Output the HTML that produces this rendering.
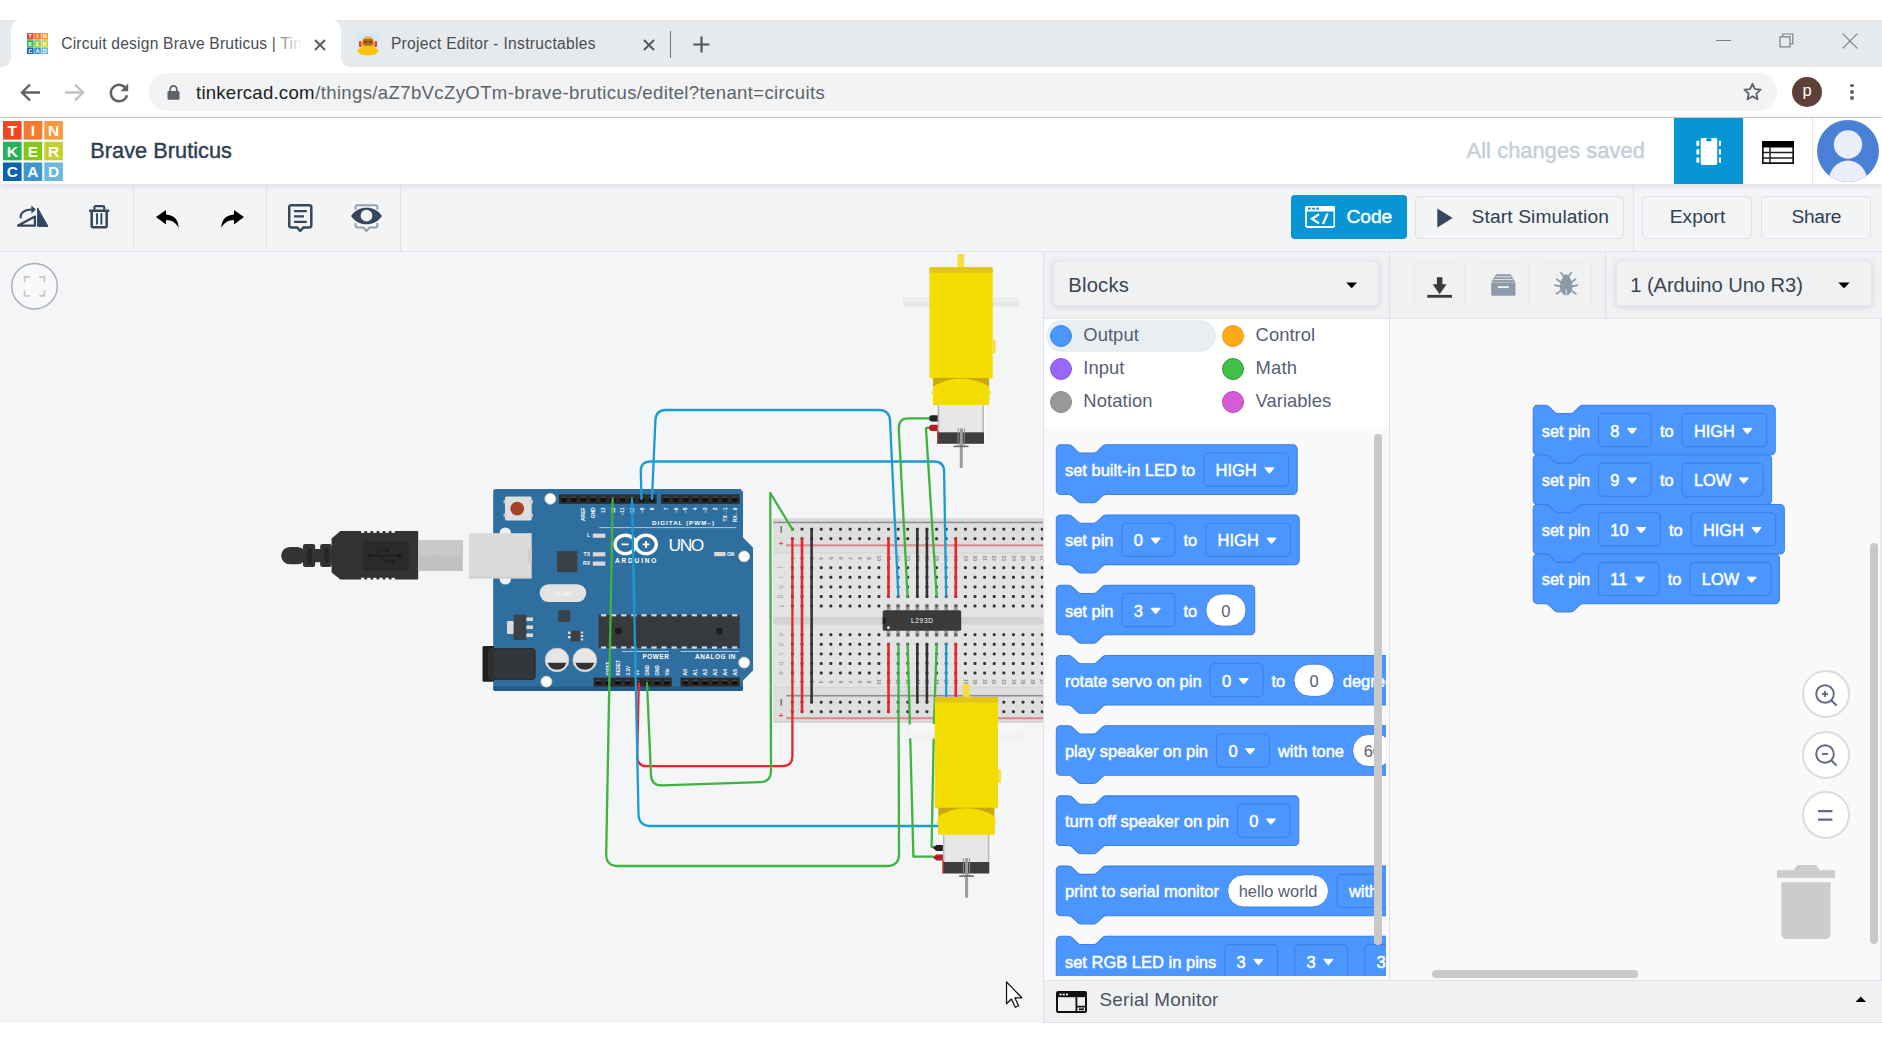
<!DOCTYPE html>
<html lang="en"><head><meta charset="utf-8"><title>Circuit design Brave Bruticus | Tinkercad</title><style>
html,body{margin:0;padding:0;background:#fff;}
body{width:1882px;height:1044px;position:relative;overflow:hidden;font-family:"Liberation Sans",Arial,sans-serif;}
.b{position:absolute;display:block;}
.t{position:absolute;white-space:nowrap;font-family:"Liberation Sans",Arial,sans-serif;}
svg{overflow:hidden;}
</style></head><body>
<div class="b" style="left:0.00px;top:252.00px;width:1043.00px;height:770.60px;background:#f4f5f7;"></div>
<div class="b" style="left:0.00px;top:20.00px;width:1882.00px;height:47.00px;background:#e7eaed;"></div>
<svg class="b" style="left:1.00px;top:20.00px;" width="350.00" height="47.00" viewBox="0 0 350 47"><path d="M0 47 C6 47 10 43 10 37 L10 10 C10 4 14 0 20 0 L330 0 C336 0 340 4 340 10 L340 37 C340 43 344 47 350 47 Z" fill="#fff"/></svg>
<svg class="b" style="left:27.00px;top:32.50px;" width="21.00" height="21.00" viewBox="0 0 21 21"><rect x="0" y="0" width="21" height="21" fill="#fff"/><rect x="0.00" y="0.00" width="6.6" height="6.6" fill="#e8452c"/><text x="3.30" y="5.40" font-family="Liberation Sans,sans-serif" font-weight="700" font-size="5.6" fill="#fff" text-anchor="middle">T</text><rect x="7.20" y="0.00" width="6.6" height="6.6" fill="#f47c2f"/><text x="10.50" y="5.40" font-family="Liberation Sans,sans-serif" font-weight="700" font-size="5.6" fill="#fff" text-anchor="middle">I</text><rect x="14.40" y="0.00" width="6.6" height="6.6" fill="#f79a2f"/><text x="17.70" y="5.40" font-family="Liberation Sans,sans-serif" font-weight="700" font-size="5.6" fill="#fff" text-anchor="middle">N</text><rect x="0.00" y="7.20" width="6.6" height="6.6" fill="#2bb24c"/><text x="3.30" y="12.60" font-family="Liberation Sans,sans-serif" font-weight="700" font-size="5.6" fill="#fff" text-anchor="middle">K</text><rect x="7.20" y="7.20" width="6.6" height="6.6" fill="#8cc63f"/><text x="10.50" y="12.60" font-family="Liberation Sans,sans-serif" font-weight="700" font-size="5.6" fill="#fff" text-anchor="middle">E</text><rect x="14.40" y="7.20" width="6.6" height="6.6" fill="#c8d12f"/><text x="17.70" y="12.60" font-family="Liberation Sans,sans-serif" font-weight="700" font-size="5.6" fill="#fff" text-anchor="middle">R</text><rect x="0.00" y="14.40" width="6.6" height="6.6" fill="#1467b3"/><text x="3.30" y="19.80" font-family="Liberation Sans,sans-serif" font-weight="700" font-size="5.6" fill="#fff" text-anchor="middle">C</text><rect x="7.20" y="14.40" width="6.6" height="6.6" fill="#3d95d0"/><text x="10.50" y="19.80" font-family="Liberation Sans,sans-serif" font-weight="700" font-size="5.6" fill="#fff" text-anchor="middle">A</text><rect x="14.40" y="14.40" width="6.6" height="6.6" fill="#66b7dd"/><text x="17.70" y="19.80" font-family="Liberation Sans,sans-serif" font-weight="700" font-size="5.6" fill="#fff" text-anchor="middle">D</text></svg>
<span class="t " style="left:61.20px;top:35.99px;font-size:15.60px;line-height:15.60px;color:#494d52;letter-spacing:0.205px;">Circuit design Brave Bruticus | Tin</span>
<div class="b" style="left:272.00px;top:30.00px;width:32.00px;height:28.00px;background:linear-gradient(90deg,rgba(255,255,255,0),#fff 95%);"></div>
<svg class="b" style="left:314.00px;top:39.00px;" width="12.00" height="12.00" viewBox="0 0 12 12"><path d="M1 1L11 11M11 1L1 11" stroke="#53575c" stroke-width="1.9" fill="none"/></svg>
<svg class="b" style="left:355.50px;top:33.50px;" width="24.00" height="22.00" viewBox="0 0 24 22"><rect x="1" y="0" width="22" height="15" rx="3" fill="#cfe9f7"/><ellipse cx="12" cy="17" rx="10.5" ry="4.5" fill="#f7c412"/><path d="M5 13 C5 5 8 2.5 12 2.5 C16 2.5 19 5 19 13 Z" fill="#f0b429"/><rect x="7" y="5" width="10" height="6.5" rx="2" fill="#b5651d"/><circle cx="9.6" cy="8" r="1.1" fill="#5d2e0c"/><circle cx="14.4" cy="8" r="1.1" fill="#5d2e0c"/><rect x="3" y="7" width="2.4" height="6" rx="1" fill="#d64545"/><rect x="18.6" y="7" width="2.4" height="6" rx="1" fill="#d64545"/></svg>
<span class="t " style="left:390.90px;top:35.99px;font-size:15.60px;line-height:15.60px;color:#494d52;letter-spacing:0.302px;">Project Editor - Instructables</span>
<svg class="b" style="left:642.50px;top:39.00px;" width="12.00" height="12.00" viewBox="0 0 12 12"><path d="M1 1L11 11M11 1L1 11" stroke="#53575c" stroke-width="1.9" fill="none"/></svg>
<div class="b" style="left:670.00px;top:31.00px;width:1.30px;height:26.50px;background:#6b7076;"></div>
<svg class="b" style="left:692.50px;top:35.50px;" width="17.00" height="17.00" viewBox="0 0 17 17"><path d="M8.5 0.5V16.5M0.5 8.5H16.5" stroke="#53575c" stroke-width="2.2" fill="none"/></svg>
<div class="b" style="left:1715.50px;top:39.50px;width:15.50px;height:1.30px;background:#7d8084;"></div>
<svg class="b" style="left:1779.00px;top:32.50px;" width="15.00" height="15.00" viewBox="0 0 15 15"><path d="M1 3.8H11V13.8H1Z M3.8 3.6V1H13.8V11H11.2" stroke="#7d8084" stroke-width="1.2" fill="none"/></svg>
<svg class="b" style="left:1842.00px;top:32.50px;" width="16.00" height="16.00" viewBox="0 0 16 16"><path d="M0.7 0.7L15.3 15.3M15.3 0.7L0.7 15.3" stroke="#7d8084" stroke-width="1.2" fill="none"/></svg>
<div class="b" style="left:0.00px;top:67.00px;width:1882.00px;height:50.00px;background:#fff;"></div>
<div class="b" style="left:0.00px;top:117.00px;width:1882.00px;height:1.20px;background:#c9cdd2;"></div>
<svg class="b" style="left:20.00px;top:83.00px;" width="21.00" height="19.00" viewBox="0 0 21 19"><path d="M20 9.5H2.5M10 1.5L2 9.5L10 17.5" stroke="#5f6368" stroke-width="2.4" fill="none"/></svg>
<svg class="b" style="left:63.50px;top:83.00px;" width="21.00" height="19.00" viewBox="0 0 21 19"><path d="M1 9.5H18.5M11 1.5L19 9.5L11 17.5" stroke="#bdc1c6" stroke-width="2.4" fill="none"/></svg>
<svg class="b" style="left:108.00px;top:81.50px;" width="22.00" height="22.00" viewBox="0 0 22 22"><path d="M18.3 7.2 A8.2 8.2 0 1 0 19 13.2" stroke="#5f6368" stroke-width="2.5" fill="none"/><path d="M20.2 1.5V9.3H12.4Z" fill="#5f6368"/></svg>
<div class="b" style="left:149.00px;top:73.00px;width:1628.00px;height:38.00px;background:#f1f3f4;border-radius:19px;"></div>
<svg class="b" style="left:167.00px;top:84.50px;" width="13.00" height="15.00" viewBox="0 0 13 15"><rect x="0.5" y="6" width="12" height="8.8" rx="1.3" fill="#5f6368"/><path d="M3.2 6.5V4.2a3.3 3.3 0 0 1 6.6 0V6.5" stroke="#5f6368" stroke-width="1.7" fill="none"/></svg>
<span class="t " style="left:196.00px;top:83.56px;font-size:18.60px;line-height:18.60px;color:#202124;letter-spacing:0.225px;">tinkercad.com</span>
<span class="t " style="left:315.20px;top:83.56px;font-size:18.60px;line-height:18.60px;color:#5f6368;letter-spacing:0.342px;">/things/aZ7bVcZyOTm-brave-bruticus/editel?tenant=circuits</span>
<svg class="b" style="left:1742.50px;top:82.00px;" width="19.00" height="19.00" viewBox="0 0 19 19"><path d="M9.5 1.8L11.9 7.1L17.6 7.7L13.3 11.6L14.5 17.3L9.5 14.4L4.5 17.3L5.7 11.6L1.4 7.7L7.1 7.1Z" stroke="#5f6368" stroke-width="1.8" fill="none" stroke-linejoin="round"/></svg>
<div class="b" style="left:1792.40px;top:76.60px;width:30.00px;height:30.00px;background:#5d4037;border-radius:50%;"></div>
<span class="t " style="left:1802.60px;top:82.03px;font-size:16.50px;line-height:16.50px;color:#fff;">p</span>
<div class="b" style="left:1850.20px;top:83.70px;width:3.80px;height:3.80px;background:#5f6368;border-radius:50%;"></div>
<div class="b" style="left:1850.20px;top:90.00px;width:3.80px;height:3.80px;background:#5f6368;border-radius:50%;"></div>
<div class="b" style="left:1850.20px;top:96.30px;width:3.80px;height:3.80px;background:#5f6368;border-radius:50%;"></div>
<div class="b" style="left:0.00px;top:118.20px;width:1882.00px;height:66.30px;background:#fff;box-shadow:0 1px 5px rgba(60,70,90,.2);z-index:3;"></div>
<svg class="b" style="left:3.00px;top:121.20px;z-index:4;" width="60.00" height="60.20" viewBox="0 0 60 60.2"><rect x="0.00" y="0.00" width="18.6" height="18.6" fill="#ee4722"/><text x="9.30" y="15.00" font-family="Liberation Sans,sans-serif" font-weight="700" font-size="15.5" fill="#fff" text-anchor="middle">T</text><rect x="20.65" y="0.00" width="18.6" height="18.6" fill="#f47a30"/><text x="29.95" y="15.00" font-family="Liberation Sans,sans-serif" font-weight="700" font-size="15.5" fill="#fff" text-anchor="middle">I</text><rect x="41.30" y="0.00" width="18.6" height="18.6" fill="#f89a3c"/><text x="50.60" y="15.00" font-family="Liberation Sans,sans-serif" font-weight="700" font-size="15.5" fill="#fff" text-anchor="middle">N</text><rect x="0.00" y="20.75" width="18.6" height="18.6" fill="#27b25a"/><text x="9.30" y="35.75" font-family="Liberation Sans,sans-serif" font-weight="700" font-size="15.5" fill="#fff" text-anchor="middle">K</text><rect x="20.65" y="20.75" width="18.6" height="18.6" fill="#84c70f"/><text x="29.95" y="35.75" font-family="Liberation Sans,sans-serif" font-weight="700" font-size="15.5" fill="#fff" text-anchor="middle">E</text><rect x="41.30" y="20.75" width="18.6" height="18.6" fill="#c4ce2c"/><text x="50.60" y="35.75" font-family="Liberation Sans,sans-serif" font-weight="700" font-size="15.5" fill="#fff" text-anchor="middle">R</text><rect x="0.00" y="41.50" width="18.6" height="18.6" fill="#0d62af"/><text x="9.30" y="56.50" font-family="Liberation Sans,sans-serif" font-weight="700" font-size="15.5" fill="#fff" text-anchor="middle">C</text><rect x="20.65" y="41.50" width="18.6" height="18.6" fill="#3e96ce"/><text x="29.95" y="56.50" font-family="Liberation Sans,sans-serif" font-weight="700" font-size="15.5" fill="#fff" text-anchor="middle">A</text><rect x="41.30" y="41.50" width="18.6" height="18.6" fill="#6ab8dd"/><text x="50.60" y="56.50" font-family="Liberation Sans,sans-serif" font-weight="700" font-size="15.5" fill="#fff" text-anchor="middle">D</text></svg>
<span class="t " style="left:90.30px;top:139.83px;font-size:21.70px;line-height:21.70px;color:#2f3f52;letter-spacing:0.049px;z-index:4;-webkit-text-stroke:0.45px #2f3f52;">Brave Bruticus</span>
<span class="t " style="left:1466.50px;top:139.75px;font-size:21.80px;line-height:21.80px;color:#c4ced9;letter-spacing:0.092px;z-index:4;-webkit-text-stroke:0.45px #c4ced9;">All changes saved</span>
<div class="b" style="left:1673.80px;top:118.20px;width:69.40px;height:66.30px;background:#0895d6;z-index:4;"></div>
<svg class="b" style="left:1695.50px;top:137.70px;z-index:5;" width="25.60" height="27.50" viewBox="0 0 25.6 27.5"><rect x="4.7" y="0" width="16.5" height="27" rx="1.4" fill="#fff"/><ellipse cx="12.95" cy="1.7" rx="2.9" ry="1.7" fill="#0895d6"/><rect x="0.4" y="2.8" width="2.8" height="5.1" fill="#fff"/><rect x="22.9" y="2.8" width="2.6" height="5.1" fill="#fff"/><rect x="0.4" y="11.3" width="2.8" height="5.1" fill="#fff"/><rect x="22.9" y="11.3" width="2.6" height="5.1" fill="#fff"/><rect x="0.4" y="19.5" width="2.8" height="5.1" fill="#fff"/><rect x="22.9" y="19.5" width="2.6" height="5.1" fill="#fff"/></svg>
<svg class="b" style="left:1762.00px;top:140.50px;z-index:5;" width="32.00" height="23.00" viewBox="0 0 32 23"><rect x="0" y="0" width="32" height="6.5" fill="#000"/><path d="M0.8 6V22.2H31.2V6" stroke="#111" stroke-width="1.7" fill="none"/><path d="M0.8 11.6H31.2M0.8 17H31.2M8 6V22" stroke="#222" stroke-width="1.5" fill="none"/></svg>
<div class="b" style="left:1811.60px;top:118.20px;width:1.00px;height:66.30px;background:#e3e6ea;z-index:4;"></div>
<svg class="b" style="left:1817.00px;top:119.60px;z-index:5;" width="62.00" height="62.00" viewBox="0 0 62 62"><defs><clipPath id="avc"><circle cx="31" cy="31" r="31"/></clipPath></defs><circle cx="31" cy="31" r="31" fill="#4a80d6"/><g clip-path="url(#avc)"><circle cx="31" cy="24.5" r="14.2" fill="#e9eef9"/><ellipse cx="31" cy="62" rx="19.5" ry="21.5" fill="#e9eef9"/></g></svg>
<div class="b" style="left:0.00px;top:184.50px;width:1882.00px;height:66.50px;background:#f3f4f6;z-index:1;"></div>
<div class="b" style="left:0.00px;top:250.60px;width:1882.00px;height:1.40px;background:#e1e4ea;z-index:2;"></div>
<div class="b" style="left:132.60px;top:184.50px;width:1.20px;height:66.50px;background:#e0e3ea;z-index:2;"></div>
<div class="b" style="left:266.00px;top:184.50px;width:1.20px;height:66.50px;background:#e0e3ea;z-index:2;"></div>
<div class="b" style="left:399.60px;top:184.50px;width:1.20px;height:66.50px;background:#e0e3ea;z-index:2;"></div>
<div class="b" style="left:1633.00px;top:184.50px;width:1.20px;height:66.50px;background:#e0e3ea;z-index:2;"></div>
<svg class="b" style="left:17.00px;top:205.30px;z-index:2;" width="32.00" height="23.00" viewBox="0 0 32 23"><path d="M20.6 21.4V2.9L31 21.4Z" fill="#34475c" stroke="#34475c" stroke-width="1" stroke-linejoin="round"/><path d="M1.2 20.6H17.9V11.6Z" stroke="#34475c" stroke-width="2.3" fill="none" stroke-linejoin="round"/><path d="M3.7 13.4C3 7.6 8 4.5 14.8 4.5" stroke="#34475c" stroke-width="2.1" fill="none"/><path d="M14.4 0.5L18.9 4.6L14.4 8.7Z" fill="#34475c"/></svg>
<svg class="b" style="left:89.00px;top:205.00px;z-index:2;" width="20.60" height="23.80" viewBox="0 0 20.6 23.8"><path d="M5.4 4.8V2.4Q5.4 1.2 6.6 1.2H14Q15.2 1.2 15.2 2.4V4.8" stroke="#34475c" stroke-width="2.2" fill="none"/><rect x="0" y="4.4" width="20.4" height="2.5" rx="0.8" fill="#34475c"/><path d="M2.7 6.8V21Q2.7 22.2 3.9 22.2H16.5Q17.7 22.2 17.7 21V6.8" stroke="#34475c" stroke-width="2.5" fill="none"/><path d="M8 9V18.8M12.4 9V18.8" stroke="#34475c" stroke-width="1.9" fill="none" stroke-linecap="round"/></svg>
<svg class="b" style="left:156.00px;top:209.50px;z-index:2;" width="23.00" height="18.20" viewBox="0 0 23 18.2"><path d="M0 7L10 0V4.6C18 5.2 22.6 9.8 22.6 18C20 12.6 16 10.2 10 10V14.4Z" fill="#000"/></svg>
<svg class="b" style="left:221.00px;top:209.50px;z-index:2;" width="23.00" height="18.20" viewBox="0 0 23 18.2"><g transform="translate(23,0) scale(-1,1)"><path d="M0 7L10 0V4.6C18 5.2 22.6 9.8 22.6 18C20 12.6 16 10.2 10 10V14.4Z" fill="#000"/></g></svg>
<svg class="b" style="left:288.00px;top:203.60px;z-index:2;" width="24.60" height="28.80" viewBox="0 0 24.6 28.8"><path d="M3 1.3H21.5a1.8 1.8 0 0 1 1.8 1.8V21.6a1.8 1.8 0 0 1 -1.8 1.8H15.4L12.25 27L9.1 23.4H3a1.8 1.8 0 0 1 -1.8 -1.8V3.1A1.8 1.8 0 0 1 3 1.3Z" stroke="#34475c" stroke-width="2.5" fill="none" stroke-linejoin="round"/><path d="M6 7.1H18.8M6 12.4H16M6 17.9H18.8" stroke="#34475c" stroke-width="2.3" fill="none"/></svg>
<svg class="b" style="left:351.00px;top:203.60px;z-index:2;" width="31.00" height="28.50" viewBox="0 0 31 28.5"><path d="M4.6 5.6V3Q4.6 1.2 6.4 1.2H24.6Q26.4 1.2 26.4 3V5.6M4.6 19V21.6Q4.6 23.4 6.4 23.4H12.2L15.5 27L18.8 23.4H24.6Q26.4 23.4 26.4 21.6V19" stroke="#94a1b0" stroke-width="2" fill="none" stroke-linejoin="round"/><path d="M0 12C4 6.1 9.4 3.7 15.5 3.7C21.6 3.7 27 6.1 31 12C27 17.9 21.6 20.3 15.5 20.3C9.4 20.3 4 17.9 0 12Z" fill="#34475c"/><circle cx="15.5" cy="11.7" r="5.9" fill="#f3f4f6"/></svg>
<div class="b" style="left:1291.00px;top:195.20px;width:116.00px;height:44.30px;background:#0895d6;border-radius:4px;z-index:2;"></div>
<svg class="b" style="left:1304.70px;top:206.40px;z-index:2;" width="30.40" height="22.40" viewBox="0 0 30.4 22.4"><rect x="1" y="1" width="28.4" height="20" rx="1.2" stroke="#fff" stroke-width="1.8" fill="none"/><rect x="0.2" y="0.2" width="30" height="5.2" rx="1.2" fill="#fff"/><rect x="3" y="1.6" width="2.6" height="2.2" rx="0.6" fill="#0895d6"/><rect x="7.2" y="1.6" width="2.6" height="2.2" rx="0.6" fill="#0895d6"/><rect x="11.4" y="1.6" width="2.6" height="2.2" rx="0.6" fill="#0895d6"/><path d="M14 8.2L7 12.8L14 17.4M22.6 7.6L18 18" stroke="#fff" stroke-width="2.3" fill="none"/></svg>
<span class="t " style="left:1346.60px;top:206.65px;font-size:19.20px;line-height:19.20px;color:#fff;letter-spacing:-0.100px;z-index:2;-webkit-text-stroke:0.4px #fff;">Code</span>
<div class="b" style="left:1415.20px;top:195.60px;width:208.60px;height:43.60px;background:#f3f4f6;border:1.2px solid #dfe2e8;border-radius:4px;box-sizing:border-box;z-index:2;"></div>
<svg class="b" style="left:1437.00px;top:207.80px;z-index:2;" width="16.00" height="19.80" viewBox="0 0 16 19.8"><path d="M0.3 0.4L15.6 9.9L0.3 19.4Z" fill="#34475c"/></svg>
<span class="t " style="left:1471.60px;top:206.65px;font-size:19.20px;line-height:19.20px;color:#2f3f52;letter-spacing:0.123px;z-index:2;">Start Simulation</span>
<div class="b" style="left:1642.40px;top:195.60px;width:109.60px;height:43.60px;background:#f3f4f6;border:1.2px solid #dfe2e8;border-radius:4px;box-sizing:border-box;z-index:2;"></div>
<span class="t " style="left:1669.80px;top:206.65px;font-size:19.20px;line-height:19.20px;color:#2f3f52;letter-spacing:0.018px;z-index:2;">Export</span>
<div class="b" style="left:1761.00px;top:195.60px;width:109.60px;height:43.60px;background:#f3f4f6;border:1.2px solid #dfe2e8;border-radius:4px;box-sizing:border-box;z-index:2;"></div>
<span class="t " style="left:1791.50px;top:206.65px;font-size:19.20px;line-height:19.20px;color:#2f3f52;letter-spacing:-0.327px;z-index:2;">Share</span>
<svg class="b" style="left:0;top:252px" width="1043" height="770.6" viewBox="0 252 1043 770.6"><g font-family="Liberation Sans,Arial,sans-serif"><circle cx="34.5" cy="286.2" r="22.8" fill="#f8f9fa" stroke="#a9aeb7" stroke-width="1.5"/><path d="M24.6 282V276.8H29.8M39.2 276.8H44.4V282M44.4 290.6V295.8H39.2M29.8 295.8H24.6V290.6" stroke="#c6c7c9" stroke-width="1.8" fill="none"/><g transform="translate(0,0)"><rect x="903.1" y="296.9" width="115.6" height="9.9" fill="#e6e7e8" rx="2"/><rect x="903.6" y="297.4" width="114.6" height="4.45" fill="#eef0f0" rx="1.5"/><rect x="957.5" y="254" width="6.8" height="15" fill="#f6dc45" /><rect x="929.5" y="267.2" width="63.2" height="111.4" fill="#f3dd00" rx="1.6"/><rect x="929.5" y="267.2" width="63.2" height="5.6" fill="#e3c613" rx="1.6"/><rect x="992.7" y="339.8" width="2.9" height="13.2" fill="#f6dc45" /><clipPath id="mc0"><rect x="932.9" y="377.7" width="56.5" height="27.6" rx="2"/></clipPath><g clip-path="url(#mc0)"><rect x="932.9" y="377.7" width="56.5" height="27.6" fill="#c9a90e" /><path d="M932.9 386.4Q961.1 370.6 989.4 386.4V405.3H932.9Z" fill="#f3dd00"/></g><rect x="931.2" y="391.6" width="1.8" height="2.4" fill="#f6dc45" /><rect x="989.3" y="391.6" width="1.7" height="2.4" fill="#f6dc45" /><rect x="933.4" y="405.3" width="55" height="41.1" fill="#f7f7f8" stroke="#ececee" stroke-width="0.6"/><rect x="937.7" y="405.3" width="46.3" height="27" fill="#e7e7e8" /><rect x="937.7" y="405.3" width="1.5" height="27" fill="#b9b9b9" /><rect x="982.5" y="405.3" width="1.5" height="27" fill="#b9b9b9" /><rect x="937.7" y="432.3" width="46.3" height="11.5" fill="#3d3d3f" /><rect x="937" y="430.6" width="1.4" height="13.2" fill="#c83232" /><path d="M927.6 418.3L931 415.3H937.6V421.4H931Z" fill="#222"/><path d="M927.6 427.8L931 424.8H937.6V430.9H931Z" fill="#b51c1c"/><rect x="957.6" y="428.4" width="1" height="17.6" fill="#8a8a8a" /><rect x="963.8" y="428.4" width="1" height="17.6" fill="#8a8a8a" /><rect x="959.8" y="428.4" width="3" height="39.6" fill="#9c9c9c" /><rect x="953.8" y="445.6" width="14.7" height="1.6" fill="#6a6a6a" /></g><rect x="773.2" y="518.4" width="270" height="204.2" fill="#dedede" /><rect x="773.2" y="553" width="270" height="134.4" fill="#e3e3e3" /><rect x="773.2" y="552.4" width="270" height="1.2" fill="#d6d6d6" /><rect x="773.2" y="686.8" width="270" height="1.2" fill="#d6d6d6" /><rect x="773.2" y="616.9" width="270" height="7.7" fill="#d2d2d2" /><rect x="773.2" y="721" width="270" height="1.6" fill="#d0d0d0" /><rect x="773.2" y="518.4" width="270" height="3.3" fill="#d9d9d9" /><rect x="773.2" y="521.7" width="270" height="1.5" fill="#8e8e8e" /><rect x="786.4" y="694.9" width="256.8" height="1.6" fill="#8e8e8e" /><rect x="786" y="544.4" width="257.2" height="1.9" fill="#da8484" /><rect x="786.4" y="717.3" width="256.8" height="1.9" fill="#da8484" /><defs><pattern id="hp" x="791.05" y="0" width="9.61" height="9.6" patternUnits="userSpaceOnUse"><rect x="0" y="0" width="2.7" height="2.7" rx="0.6" fill="#3c3c3c"/></pattern></defs><g fill="#333"><rect x="790.9" y="527.7" width="3" height="3" rx="1.1"/><rect x="800.51" y="527.7" width="3" height="3" rx="1.1"/><rect x="810.12" y="527.7" width="3" height="3" rx="1.1"/><rect x="819.73" y="527.7" width="3" height="3" rx="1.1"/><rect x="829.34" y="527.7" width="3" height="3" rx="1.1"/><rect x="838.95" y="527.7" width="3" height="3" rx="1.1"/><rect x="848.56" y="527.7" width="3" height="3" rx="1.1"/><rect x="858.17" y="527.7" width="3" height="3" rx="1.1"/><rect x="867.78" y="527.7" width="3" height="3" rx="1.1"/><rect x="877.39" y="527.7" width="3" height="3" rx="1.1"/><rect x="887" y="527.7" width="3" height="3" rx="1.1"/><rect x="896.61" y="527.7" width="3" height="3" rx="1.1"/><rect x="906.22" y="527.7" width="3" height="3" rx="1.1"/><rect x="915.83" y="527.7" width="3" height="3" rx="1.1"/><rect x="925.44" y="527.7" width="3" height="3" rx="1.1"/><rect x="935.05" y="527.7" width="3" height="3" rx="1.1"/><rect x="944.66" y="527.7" width="3" height="3" rx="1.1"/><rect x="954.27" y="527.7" width="3" height="3" rx="1.1"/><rect x="963.88" y="527.7" width="3" height="3" rx="1.1"/><rect x="973.49" y="527.7" width="3" height="3" rx="1.1"/><rect x="983.1" y="527.7" width="3" height="3" rx="1.1"/><rect x="992.71" y="527.7" width="3" height="3" rx="1.1"/><rect x="1002.32" y="527.7" width="3" height="3" rx="1.1"/><rect x="1011.93" y="527.7" width="3" height="3" rx="1.1"/><rect x="1021.54" y="527.7" width="3" height="3" rx="1.1"/><rect x="1031.15" y="527.7" width="3" height="3" rx="1.1"/><rect x="1040.76" y="527.7" width="3" height="3" rx="1.1"/><rect x="790.9" y="537.2" width="3" height="3" rx="1.1"/><rect x="800.51" y="537.2" width="3" height="3" rx="1.1"/><rect x="810.12" y="537.2" width="3" height="3" rx="1.1"/><rect x="819.73" y="537.2" width="3" height="3" rx="1.1"/><rect x="829.34" y="537.2" width="3" height="3" rx="1.1"/><rect x="838.95" y="537.2" width="3" height="3" rx="1.1"/><rect x="848.56" y="537.2" width="3" height="3" rx="1.1"/><rect x="858.17" y="537.2" width="3" height="3" rx="1.1"/><rect x="867.78" y="537.2" width="3" height="3" rx="1.1"/><rect x="877.39" y="537.2" width="3" height="3" rx="1.1"/><rect x="887" y="537.2" width="3" height="3" rx="1.1"/><rect x="896.61" y="537.2" width="3" height="3" rx="1.1"/><rect x="906.22" y="537.2" width="3" height="3" rx="1.1"/><rect x="915.83" y="537.2" width="3" height="3" rx="1.1"/><rect x="925.44" y="537.2" width="3" height="3" rx="1.1"/><rect x="935.05" y="537.2" width="3" height="3" rx="1.1"/><rect x="944.66" y="537.2" width="3" height="3" rx="1.1"/><rect x="954.27" y="537.2" width="3" height="3" rx="1.1"/><rect x="963.88" y="537.2" width="3" height="3" rx="1.1"/><rect x="973.49" y="537.2" width="3" height="3" rx="1.1"/><rect x="983.1" y="537.2" width="3" height="3" rx="1.1"/><rect x="992.71" y="537.2" width="3" height="3" rx="1.1"/><rect x="1002.32" y="537.2" width="3" height="3" rx="1.1"/><rect x="1011.93" y="537.2" width="3" height="3" rx="1.1"/><rect x="1021.54" y="537.2" width="3" height="3" rx="1.1"/><rect x="1031.15" y="537.2" width="3" height="3" rx="1.1"/><rect x="1040.76" y="537.2" width="3" height="3" rx="1.1"/><rect x="790.9" y="566.2" width="3" height="3" rx="1.1"/><rect x="800.51" y="566.2" width="3" height="3" rx="1.1"/><rect x="810.12" y="566.2" width="3" height="3" rx="1.1"/><rect x="819.73" y="566.2" width="3" height="3" rx="1.1"/><rect x="829.34" y="566.2" width="3" height="3" rx="1.1"/><rect x="838.95" y="566.2" width="3" height="3" rx="1.1"/><rect x="848.56" y="566.2" width="3" height="3" rx="1.1"/><rect x="858.17" y="566.2" width="3" height="3" rx="1.1"/><rect x="867.78" y="566.2" width="3" height="3" rx="1.1"/><rect x="877.39" y="566.2" width="3" height="3" rx="1.1"/><rect x="887" y="566.2" width="3" height="3" rx="1.1"/><rect x="896.61" y="566.2" width="3" height="3" rx="1.1"/><rect x="906.22" y="566.2" width="3" height="3" rx="1.1"/><rect x="915.83" y="566.2" width="3" height="3" rx="1.1"/><rect x="925.44" y="566.2" width="3" height="3" rx="1.1"/><rect x="935.05" y="566.2" width="3" height="3" rx="1.1"/><rect x="944.66" y="566.2" width="3" height="3" rx="1.1"/><rect x="954.27" y="566.2" width="3" height="3" rx="1.1"/><rect x="963.88" y="566.2" width="3" height="3" rx="1.1"/><rect x="973.49" y="566.2" width="3" height="3" rx="1.1"/><rect x="983.1" y="566.2" width="3" height="3" rx="1.1"/><rect x="992.71" y="566.2" width="3" height="3" rx="1.1"/><rect x="1002.32" y="566.2" width="3" height="3" rx="1.1"/><rect x="1011.93" y="566.2" width="3" height="3" rx="1.1"/><rect x="1021.54" y="566.2" width="3" height="3" rx="1.1"/><rect x="1031.15" y="566.2" width="3" height="3" rx="1.1"/><rect x="1040.76" y="566.2" width="3" height="3" rx="1.1"/><rect x="790.9" y="575.8" width="3" height="3" rx="1.1"/><rect x="800.51" y="575.8" width="3" height="3" rx="1.1"/><rect x="810.12" y="575.8" width="3" height="3" rx="1.1"/><rect x="819.73" y="575.8" width="3" height="3" rx="1.1"/><rect x="829.34" y="575.8" width="3" height="3" rx="1.1"/><rect x="838.95" y="575.8" width="3" height="3" rx="1.1"/><rect x="848.56" y="575.8" width="3" height="3" rx="1.1"/><rect x="858.17" y="575.8" width="3" height="3" rx="1.1"/><rect x="867.78" y="575.8" width="3" height="3" rx="1.1"/><rect x="877.39" y="575.8" width="3" height="3" rx="1.1"/><rect x="887" y="575.8" width="3" height="3" rx="1.1"/><rect x="896.61" y="575.8" width="3" height="3" rx="1.1"/><rect x="906.22" y="575.8" width="3" height="3" rx="1.1"/><rect x="915.83" y="575.8" width="3" height="3" rx="1.1"/><rect x="925.44" y="575.8" width="3" height="3" rx="1.1"/><rect x="935.05" y="575.8" width="3" height="3" rx="1.1"/><rect x="944.66" y="575.8" width="3" height="3" rx="1.1"/><rect x="954.27" y="575.8" width="3" height="3" rx="1.1"/><rect x="963.88" y="575.8" width="3" height="3" rx="1.1"/><rect x="973.49" y="575.8" width="3" height="3" rx="1.1"/><rect x="983.1" y="575.8" width="3" height="3" rx="1.1"/><rect x="992.71" y="575.8" width="3" height="3" rx="1.1"/><rect x="1002.32" y="575.8" width="3" height="3" rx="1.1"/><rect x="1011.93" y="575.8" width="3" height="3" rx="1.1"/><rect x="1021.54" y="575.8" width="3" height="3" rx="1.1"/><rect x="1031.15" y="575.8" width="3" height="3" rx="1.1"/><rect x="1040.76" y="575.8" width="3" height="3" rx="1.1"/><rect x="790.9" y="585.4" width="3" height="3" rx="1.1"/><rect x="800.51" y="585.4" width="3" height="3" rx="1.1"/><rect x="810.12" y="585.4" width="3" height="3" rx="1.1"/><rect x="819.73" y="585.4" width="3" height="3" rx="1.1"/><rect x="829.34" y="585.4" width="3" height="3" rx="1.1"/><rect x="838.95" y="585.4" width="3" height="3" rx="1.1"/><rect x="848.56" y="585.4" width="3" height="3" rx="1.1"/><rect x="858.17" y="585.4" width="3" height="3" rx="1.1"/><rect x="867.78" y="585.4" width="3" height="3" rx="1.1"/><rect x="877.39" y="585.4" width="3" height="3" rx="1.1"/><rect x="887" y="585.4" width="3" height="3" rx="1.1"/><rect x="896.61" y="585.4" width="3" height="3" rx="1.1"/><rect x="906.22" y="585.4" width="3" height="3" rx="1.1"/><rect x="915.83" y="585.4" width="3" height="3" rx="1.1"/><rect x="925.44" y="585.4" width="3" height="3" rx="1.1"/><rect x="935.05" y="585.4" width="3" height="3" rx="1.1"/><rect x="944.66" y="585.4" width="3" height="3" rx="1.1"/><rect x="954.27" y="585.4" width="3" height="3" rx="1.1"/><rect x="963.88" y="585.4" width="3" height="3" rx="1.1"/><rect x="973.49" y="585.4" width="3" height="3" rx="1.1"/><rect x="983.1" y="585.4" width="3" height="3" rx="1.1"/><rect x="992.71" y="585.4" width="3" height="3" rx="1.1"/><rect x="1002.32" y="585.4" width="3" height="3" rx="1.1"/><rect x="1011.93" y="585.4" width="3" height="3" rx="1.1"/><rect x="1021.54" y="585.4" width="3" height="3" rx="1.1"/><rect x="1031.15" y="585.4" width="3" height="3" rx="1.1"/><rect x="1040.76" y="585.4" width="3" height="3" rx="1.1"/><rect x="790.9" y="595" width="3" height="3" rx="1.1"/><rect x="800.51" y="595" width="3" height="3" rx="1.1"/><rect x="810.12" y="595" width="3" height="3" rx="1.1"/><rect x="819.73" y="595" width="3" height="3" rx="1.1"/><rect x="829.34" y="595" width="3" height="3" rx="1.1"/><rect x="838.95" y="595" width="3" height="3" rx="1.1"/><rect x="848.56" y="595" width="3" height="3" rx="1.1"/><rect x="858.17" y="595" width="3" height="3" rx="1.1"/><rect x="867.78" y="595" width="3" height="3" rx="1.1"/><rect x="877.39" y="595" width="3" height="3" rx="1.1"/><rect x="887" y="595" width="3" height="3" rx="1.1"/><rect x="896.61" y="595" width="3" height="3" rx="1.1"/><rect x="906.22" y="595" width="3" height="3" rx="1.1"/><rect x="915.83" y="595" width="3" height="3" rx="1.1"/><rect x="925.44" y="595" width="3" height="3" rx="1.1"/><rect x="935.05" y="595" width="3" height="3" rx="1.1"/><rect x="944.66" y="595" width="3" height="3" rx="1.1"/><rect x="954.27" y="595" width="3" height="3" rx="1.1"/><rect x="963.88" y="595" width="3" height="3" rx="1.1"/><rect x="973.49" y="595" width="3" height="3" rx="1.1"/><rect x="983.1" y="595" width="3" height="3" rx="1.1"/><rect x="992.71" y="595" width="3" height="3" rx="1.1"/><rect x="1002.32" y="595" width="3" height="3" rx="1.1"/><rect x="1011.93" y="595" width="3" height="3" rx="1.1"/><rect x="1021.54" y="595" width="3" height="3" rx="1.1"/><rect x="1031.15" y="595" width="3" height="3" rx="1.1"/><rect x="1040.76" y="595" width="3" height="3" rx="1.1"/><rect x="790.9" y="604.6" width="3" height="3" rx="1.1"/><rect x="800.51" y="604.6" width="3" height="3" rx="1.1"/><rect x="810.12" y="604.6" width="3" height="3" rx="1.1"/><rect x="819.73" y="604.6" width="3" height="3" rx="1.1"/><rect x="829.34" y="604.6" width="3" height="3" rx="1.1"/><rect x="838.95" y="604.6" width="3" height="3" rx="1.1"/><rect x="848.56" y="604.6" width="3" height="3" rx="1.1"/><rect x="858.17" y="604.6" width="3" height="3" rx="1.1"/><rect x="867.78" y="604.6" width="3" height="3" rx="1.1"/><rect x="877.39" y="604.6" width="3" height="3" rx="1.1"/><rect x="887" y="604.6" width="3" height="3" rx="1.1"/><rect x="896.61" y="604.6" width="3" height="3" rx="1.1"/><rect x="906.22" y="604.6" width="3" height="3" rx="1.1"/><rect x="915.83" y="604.6" width="3" height="3" rx="1.1"/><rect x="925.44" y="604.6" width="3" height="3" rx="1.1"/><rect x="935.05" y="604.6" width="3" height="3" rx="1.1"/><rect x="944.66" y="604.6" width="3" height="3" rx="1.1"/><rect x="954.27" y="604.6" width="3" height="3" rx="1.1"/><rect x="963.88" y="604.6" width="3" height="3" rx="1.1"/><rect x="973.49" y="604.6" width="3" height="3" rx="1.1"/><rect x="983.1" y="604.6" width="3" height="3" rx="1.1"/><rect x="992.71" y="604.6" width="3" height="3" rx="1.1"/><rect x="1002.32" y="604.6" width="3" height="3" rx="1.1"/><rect x="1011.93" y="604.6" width="3" height="3" rx="1.1"/><rect x="1021.54" y="604.6" width="3" height="3" rx="1.1"/><rect x="1031.15" y="604.6" width="3" height="3" rx="1.1"/><rect x="1040.76" y="604.6" width="3" height="3" rx="1.1"/><rect x="790.9" y="633.2" width="3" height="3" rx="1.1"/><rect x="800.51" y="633.2" width="3" height="3" rx="1.1"/><rect x="810.12" y="633.2" width="3" height="3" rx="1.1"/><rect x="819.73" y="633.2" width="3" height="3" rx="1.1"/><rect x="829.34" y="633.2" width="3" height="3" rx="1.1"/><rect x="838.95" y="633.2" width="3" height="3" rx="1.1"/><rect x="848.56" y="633.2" width="3" height="3" rx="1.1"/><rect x="858.17" y="633.2" width="3" height="3" rx="1.1"/><rect x="867.78" y="633.2" width="3" height="3" rx="1.1"/><rect x="877.39" y="633.2" width="3" height="3" rx="1.1"/><rect x="887" y="633.2" width="3" height="3" rx="1.1"/><rect x="896.61" y="633.2" width="3" height="3" rx="1.1"/><rect x="906.22" y="633.2" width="3" height="3" rx="1.1"/><rect x="915.83" y="633.2" width="3" height="3" rx="1.1"/><rect x="925.44" y="633.2" width="3" height="3" rx="1.1"/><rect x="935.05" y="633.2" width="3" height="3" rx="1.1"/><rect x="944.66" y="633.2" width="3" height="3" rx="1.1"/><rect x="954.27" y="633.2" width="3" height="3" rx="1.1"/><rect x="963.88" y="633.2" width="3" height="3" rx="1.1"/><rect x="973.49" y="633.2" width="3" height="3" rx="1.1"/><rect x="983.1" y="633.2" width="3" height="3" rx="1.1"/><rect x="992.71" y="633.2" width="3" height="3" rx="1.1"/><rect x="1002.32" y="633.2" width="3" height="3" rx="1.1"/><rect x="1011.93" y="633.2" width="3" height="3" rx="1.1"/><rect x="1021.54" y="633.2" width="3" height="3" rx="1.1"/><rect x="1031.15" y="633.2" width="3" height="3" rx="1.1"/><rect x="1040.76" y="633.2" width="3" height="3" rx="1.1"/><rect x="790.9" y="642.8" width="3" height="3" rx="1.1"/><rect x="800.51" y="642.8" width="3" height="3" rx="1.1"/><rect x="810.12" y="642.8" width="3" height="3" rx="1.1"/><rect x="819.73" y="642.8" width="3" height="3" rx="1.1"/><rect x="829.34" y="642.8" width="3" height="3" rx="1.1"/><rect x="838.95" y="642.8" width="3" height="3" rx="1.1"/><rect x="848.56" y="642.8" width="3" height="3" rx="1.1"/><rect x="858.17" y="642.8" width="3" height="3" rx="1.1"/><rect x="867.78" y="642.8" width="3" height="3" rx="1.1"/><rect x="877.39" y="642.8" width="3" height="3" rx="1.1"/><rect x="887" y="642.8" width="3" height="3" rx="1.1"/><rect x="896.61" y="642.8" width="3" height="3" rx="1.1"/><rect x="906.22" y="642.8" width="3" height="3" rx="1.1"/><rect x="915.83" y="642.8" width="3" height="3" rx="1.1"/><rect x="925.44" y="642.8" width="3" height="3" rx="1.1"/><rect x="935.05" y="642.8" width="3" height="3" rx="1.1"/><rect x="944.66" y="642.8" width="3" height="3" rx="1.1"/><rect x="954.27" y="642.8" width="3" height="3" rx="1.1"/><rect x="963.88" y="642.8" width="3" height="3" rx="1.1"/><rect x="973.49" y="642.8" width="3" height="3" rx="1.1"/><rect x="983.1" y="642.8" width="3" height="3" rx="1.1"/><rect x="992.71" y="642.8" width="3" height="3" rx="1.1"/><rect x="1002.32" y="642.8" width="3" height="3" rx="1.1"/><rect x="1011.93" y="642.8" width="3" height="3" rx="1.1"/><rect x="1021.54" y="642.8" width="3" height="3" rx="1.1"/><rect x="1031.15" y="642.8" width="3" height="3" rx="1.1"/><rect x="1040.76" y="642.8" width="3" height="3" rx="1.1"/><rect x="790.9" y="652.4" width="3" height="3" rx="1.1"/><rect x="800.51" y="652.4" width="3" height="3" rx="1.1"/><rect x="810.12" y="652.4" width="3" height="3" rx="1.1"/><rect x="819.73" y="652.4" width="3" height="3" rx="1.1"/><rect x="829.34" y="652.4" width="3" height="3" rx="1.1"/><rect x="838.95" y="652.4" width="3" height="3" rx="1.1"/><rect x="848.56" y="652.4" width="3" height="3" rx="1.1"/><rect x="858.17" y="652.4" width="3" height="3" rx="1.1"/><rect x="867.78" y="652.4" width="3" height="3" rx="1.1"/><rect x="877.39" y="652.4" width="3" height="3" rx="1.1"/><rect x="887" y="652.4" width="3" height="3" rx="1.1"/><rect x="896.61" y="652.4" width="3" height="3" rx="1.1"/><rect x="906.22" y="652.4" width="3" height="3" rx="1.1"/><rect x="915.83" y="652.4" width="3" height="3" rx="1.1"/><rect x="925.44" y="652.4" width="3" height="3" rx="1.1"/><rect x="935.05" y="652.4" width="3" height="3" rx="1.1"/><rect x="944.66" y="652.4" width="3" height="3" rx="1.1"/><rect x="954.27" y="652.4" width="3" height="3" rx="1.1"/><rect x="963.88" y="652.4" width="3" height="3" rx="1.1"/><rect x="973.49" y="652.4" width="3" height="3" rx="1.1"/><rect x="983.1" y="652.4" width="3" height="3" rx="1.1"/><rect x="992.71" y="652.4" width="3" height="3" rx="1.1"/><rect x="1002.32" y="652.4" width="3" height="3" rx="1.1"/><rect x="1011.93" y="652.4" width="3" height="3" rx="1.1"/><rect x="1021.54" y="652.4" width="3" height="3" rx="1.1"/><rect x="1031.15" y="652.4" width="3" height="3" rx="1.1"/><rect x="1040.76" y="652.4" width="3" height="3" rx="1.1"/><rect x="790.9" y="662" width="3" height="3" rx="1.1"/><rect x="800.51" y="662" width="3" height="3" rx="1.1"/><rect x="810.12" y="662" width="3" height="3" rx="1.1"/><rect x="819.73" y="662" width="3" height="3" rx="1.1"/><rect x="829.34" y="662" width="3" height="3" rx="1.1"/><rect x="838.95" y="662" width="3" height="3" rx="1.1"/><rect x="848.56" y="662" width="3" height="3" rx="1.1"/><rect x="858.17" y="662" width="3" height="3" rx="1.1"/><rect x="867.78" y="662" width="3" height="3" rx="1.1"/><rect x="877.39" y="662" width="3" height="3" rx="1.1"/><rect x="887" y="662" width="3" height="3" rx="1.1"/><rect x="896.61" y="662" width="3" height="3" rx="1.1"/><rect x="906.22" y="662" width="3" height="3" rx="1.1"/><rect x="915.83" y="662" width="3" height="3" rx="1.1"/><rect x="925.44" y="662" width="3" height="3" rx="1.1"/><rect x="935.05" y="662" width="3" height="3" rx="1.1"/><rect x="944.66" y="662" width="3" height="3" rx="1.1"/><rect x="954.27" y="662" width="3" height="3" rx="1.1"/><rect x="963.88" y="662" width="3" height="3" rx="1.1"/><rect x="973.49" y="662" width="3" height="3" rx="1.1"/><rect x="983.1" y="662" width="3" height="3" rx="1.1"/><rect x="992.71" y="662" width="3" height="3" rx="1.1"/><rect x="1002.32" y="662" width="3" height="3" rx="1.1"/><rect x="1011.93" y="662" width="3" height="3" rx="1.1"/><rect x="1021.54" y="662" width="3" height="3" rx="1.1"/><rect x="1031.15" y="662" width="3" height="3" rx="1.1"/><rect x="1040.76" y="662" width="3" height="3" rx="1.1"/><rect x="790.9" y="671.6" width="3" height="3" rx="1.1"/><rect x="800.51" y="671.6" width="3" height="3" rx="1.1"/><rect x="810.12" y="671.6" width="3" height="3" rx="1.1"/><rect x="819.73" y="671.6" width="3" height="3" rx="1.1"/><rect x="829.34" y="671.6" width="3" height="3" rx="1.1"/><rect x="838.95" y="671.6" width="3" height="3" rx="1.1"/><rect x="848.56" y="671.6" width="3" height="3" rx="1.1"/><rect x="858.17" y="671.6" width="3" height="3" rx="1.1"/><rect x="867.78" y="671.6" width="3" height="3" rx="1.1"/><rect x="877.39" y="671.6" width="3" height="3" rx="1.1"/><rect x="887" y="671.6" width="3" height="3" rx="1.1"/><rect x="896.61" y="671.6" width="3" height="3" rx="1.1"/><rect x="906.22" y="671.6" width="3" height="3" rx="1.1"/><rect x="915.83" y="671.6" width="3" height="3" rx="1.1"/><rect x="925.44" y="671.6" width="3" height="3" rx="1.1"/><rect x="935.05" y="671.6" width="3" height="3" rx="1.1"/><rect x="944.66" y="671.6" width="3" height="3" rx="1.1"/><rect x="954.27" y="671.6" width="3" height="3" rx="1.1"/><rect x="963.88" y="671.6" width="3" height="3" rx="1.1"/><rect x="973.49" y="671.6" width="3" height="3" rx="1.1"/><rect x="983.1" y="671.6" width="3" height="3" rx="1.1"/><rect x="992.71" y="671.6" width="3" height="3" rx="1.1"/><rect x="1002.32" y="671.6" width="3" height="3" rx="1.1"/><rect x="1011.93" y="671.6" width="3" height="3" rx="1.1"/><rect x="1021.54" y="671.6" width="3" height="3" rx="1.1"/><rect x="1031.15" y="671.6" width="3" height="3" rx="1.1"/><rect x="1040.76" y="671.6" width="3" height="3" rx="1.1"/><rect x="790.9" y="700.7" width="3" height="3" rx="1.1"/><rect x="800.51" y="700.7" width="3" height="3" rx="1.1"/><rect x="810.12" y="700.7" width="3" height="3" rx="1.1"/><rect x="819.73" y="700.7" width="3" height="3" rx="1.1"/><rect x="829.34" y="700.7" width="3" height="3" rx="1.1"/><rect x="838.95" y="700.7" width="3" height="3" rx="1.1"/><rect x="848.56" y="700.7" width="3" height="3" rx="1.1"/><rect x="858.17" y="700.7" width="3" height="3" rx="1.1"/><rect x="867.78" y="700.7" width="3" height="3" rx="1.1"/><rect x="877.39" y="700.7" width="3" height="3" rx="1.1"/><rect x="887" y="700.7" width="3" height="3" rx="1.1"/><rect x="896.61" y="700.7" width="3" height="3" rx="1.1"/><rect x="906.22" y="700.7" width="3" height="3" rx="1.1"/><rect x="915.83" y="700.7" width="3" height="3" rx="1.1"/><rect x="925.44" y="700.7" width="3" height="3" rx="1.1"/><rect x="935.05" y="700.7" width="3" height="3" rx="1.1"/><rect x="944.66" y="700.7" width="3" height="3" rx="1.1"/><rect x="954.27" y="700.7" width="3" height="3" rx="1.1"/><rect x="963.88" y="700.7" width="3" height="3" rx="1.1"/><rect x="973.49" y="700.7" width="3" height="3" rx="1.1"/><rect x="983.1" y="700.7" width="3" height="3" rx="1.1"/><rect x="992.71" y="700.7" width="3" height="3" rx="1.1"/><rect x="1002.32" y="700.7" width="3" height="3" rx="1.1"/><rect x="1011.93" y="700.7" width="3" height="3" rx="1.1"/><rect x="1021.54" y="700.7" width="3" height="3" rx="1.1"/><rect x="1031.15" y="700.7" width="3" height="3" rx="1.1"/><rect x="1040.76" y="700.7" width="3" height="3" rx="1.1"/><rect x="790.9" y="710.2" width="3" height="3" rx="1.1"/><rect x="800.51" y="710.2" width="3" height="3" rx="1.1"/><rect x="810.12" y="710.2" width="3" height="3" rx="1.1"/><rect x="819.73" y="710.2" width="3" height="3" rx="1.1"/><rect x="829.34" y="710.2" width="3" height="3" rx="1.1"/><rect x="838.95" y="710.2" width="3" height="3" rx="1.1"/><rect x="848.56" y="710.2" width="3" height="3" rx="1.1"/><rect x="858.17" y="710.2" width="3" height="3" rx="1.1"/><rect x="867.78" y="710.2" width="3" height="3" rx="1.1"/><rect x="877.39" y="710.2" width="3" height="3" rx="1.1"/><rect x="887" y="710.2" width="3" height="3" rx="1.1"/><rect x="896.61" y="710.2" width="3" height="3" rx="1.1"/><rect x="906.22" y="710.2" width="3" height="3" rx="1.1"/><rect x="915.83" y="710.2" width="3" height="3" rx="1.1"/><rect x="925.44" y="710.2" width="3" height="3" rx="1.1"/><rect x="935.05" y="710.2" width="3" height="3" rx="1.1"/><rect x="944.66" y="710.2" width="3" height="3" rx="1.1"/><rect x="954.27" y="710.2" width="3" height="3" rx="1.1"/><rect x="963.88" y="710.2" width="3" height="3" rx="1.1"/><rect x="973.49" y="710.2" width="3" height="3" rx="1.1"/><rect x="983.1" y="710.2" width="3" height="3" rx="1.1"/><rect x="992.71" y="710.2" width="3" height="3" rx="1.1"/><rect x="1002.32" y="710.2" width="3" height="3" rx="1.1"/><rect x="1011.93" y="710.2" width="3" height="3" rx="1.1"/><rect x="1021.54" y="710.2" width="3" height="3" rx="1.1"/><rect x="1031.15" y="710.2" width="3" height="3" rx="1.1"/><rect x="1040.76" y="710.2" width="3" height="3" rx="1.1"/></g><g font-size="6.4"><rect x="780.6" y="526" width="1.2" height="6.8" fill="#555" /><rect x="780.6" y="699" width="1.2" height="6.8" fill="#555" /><text x="781.2" y="545.8" font-size="8" fill="#e04a4a" text-anchor="middle" font-weight="700">+</text><text x="781.2" y="718.4" font-size="8" fill="#e04a4a" text-anchor="middle" font-weight="700">+</text><text transform="translate(779,567.7) rotate(90)" font-size="6.4" fill="#a0a0a0" text-anchor="middle" font-weight="400">j</text><text transform="translate(779,577.3) rotate(90)" font-size="6.4" fill="#a0a0a0" text-anchor="middle" font-weight="400">i</text><text transform="translate(779,586.9) rotate(90)" font-size="6.4" fill="#a0a0a0" text-anchor="middle" font-weight="400">h</text><text transform="translate(779,596.5) rotate(90)" font-size="6.4" fill="#a0a0a0" text-anchor="middle" font-weight="400">g</text><text transform="translate(779,606.1) rotate(90)" font-size="6.4" fill="#a0a0a0" text-anchor="middle" font-weight="400">f</text><text transform="translate(779,634.7) rotate(90)" font-size="6.4" fill="#a0a0a0" text-anchor="middle" font-weight="400">e</text><text transform="translate(779,644.3) rotate(90)" font-size="6.4" fill="#a0a0a0" text-anchor="middle" font-weight="400">d</text><text transform="translate(779,653.9) rotate(90)" font-size="6.4" fill="#a0a0a0" text-anchor="middle" font-weight="400">c</text><text transform="translate(779,663.5) rotate(90)" font-size="6.4" fill="#a0a0a0" text-anchor="middle" font-weight="400">b</text><text transform="translate(779,673.1) rotate(90)" font-size="6.4" fill="#a0a0a0" text-anchor="middle" font-weight="400">a</text><text transform="translate(790.6,558.2) rotate(90)" font-size="4.7" fill="#8c8c8c" text-anchor="middle" font-weight="700">1</text><text transform="translate(790.6,681.8) rotate(90)" font-size="4.7" fill="#8c8c8c" text-anchor="middle" font-weight="700">1</text><text transform="translate(800.21,558.2) rotate(90)" font-size="4.7" fill="#8c8c8c" text-anchor="middle" font-weight="700">2</text><text transform="translate(800.21,681.8) rotate(90)" font-size="4.7" fill="#8c8c8c" text-anchor="middle" font-weight="700">2</text><text transform="translate(809.82,558.2) rotate(90)" font-size="4.7" fill="#8c8c8c" text-anchor="middle" font-weight="700">3</text><text transform="translate(809.82,681.8) rotate(90)" font-size="4.7" fill="#8c8c8c" text-anchor="middle" font-weight="700">3</text><text transform="translate(819.43,558.2) rotate(90)" font-size="4.7" fill="#8c8c8c" text-anchor="middle" font-weight="700">4</text><text transform="translate(819.43,681.8) rotate(90)" font-size="4.7" fill="#8c8c8c" text-anchor="middle" font-weight="700">4</text><text transform="translate(829.04,558.2) rotate(90)" font-size="4.7" fill="#8c8c8c" text-anchor="middle" font-weight="700">5</text><text transform="translate(829.04,681.8) rotate(90)" font-size="4.7" fill="#8c8c8c" text-anchor="middle" font-weight="700">5</text><text transform="translate(838.65,558.2) rotate(90)" font-size="4.7" fill="#8c8c8c" text-anchor="middle" font-weight="700">6</text><text transform="translate(838.65,681.8) rotate(90)" font-size="4.7" fill="#8c8c8c" text-anchor="middle" font-weight="700">6</text><text transform="translate(848.26,558.2) rotate(90)" font-size="4.7" fill="#8c8c8c" text-anchor="middle" font-weight="700">7</text><text transform="translate(848.26,681.8) rotate(90)" font-size="4.7" fill="#8c8c8c" text-anchor="middle" font-weight="700">7</text><text transform="translate(857.87,558.2) rotate(90)" font-size="4.7" fill="#8c8c8c" text-anchor="middle" font-weight="700">8</text><text transform="translate(857.87,681.8) rotate(90)" font-size="4.7" fill="#8c8c8c" text-anchor="middle" font-weight="700">8</text><text transform="translate(867.48,558.2) rotate(90)" font-size="4.7" fill="#8c8c8c" text-anchor="middle" font-weight="700">9</text><text transform="translate(867.48,681.8) rotate(90)" font-size="4.7" fill="#8c8c8c" text-anchor="middle" font-weight="700">9</text><text transform="translate(877.09,558.2) rotate(90)" font-size="4.7" fill="#8c8c8c" text-anchor="middle" font-weight="700">10</text><text transform="translate(877.09,681.8) rotate(90)" font-size="4.7" fill="#8c8c8c" text-anchor="middle" font-weight="700">10</text><text transform="translate(886.7,558.2) rotate(90)" font-size="4.7" fill="#8c8c8c" text-anchor="middle" font-weight="700">11</text><text transform="translate(886.7,681.8) rotate(90)" font-size="4.7" fill="#8c8c8c" text-anchor="middle" font-weight="700">11</text><text transform="translate(896.31,558.2) rotate(90)" font-size="4.7" fill="#8c8c8c" text-anchor="middle" font-weight="700">12</text><text transform="translate(896.31,681.8) rotate(90)" font-size="4.7" fill="#8c8c8c" text-anchor="middle" font-weight="700">12</text><text transform="translate(905.92,558.2) rotate(90)" font-size="4.7" fill="#8c8c8c" text-anchor="middle" font-weight="700">13</text><text transform="translate(905.92,681.8) rotate(90)" font-size="4.7" fill="#8c8c8c" text-anchor="middle" font-weight="700">13</text><text transform="translate(915.53,558.2) rotate(90)" font-size="4.7" fill="#8c8c8c" text-anchor="middle" font-weight="700">14</text><text transform="translate(915.53,681.8) rotate(90)" font-size="4.7" fill="#8c8c8c" text-anchor="middle" font-weight="700">14</text><text transform="translate(925.14,558.2) rotate(90)" font-size="4.7" fill="#8c8c8c" text-anchor="middle" font-weight="700">15</text><text transform="translate(925.14,681.8) rotate(90)" font-size="4.7" fill="#8c8c8c" text-anchor="middle" font-weight="700">15</text><text transform="translate(934.75,558.2) rotate(90)" font-size="4.7" fill="#8c8c8c" text-anchor="middle" font-weight="700">16</text><text transform="translate(934.75,681.8) rotate(90)" font-size="4.7" fill="#8c8c8c" text-anchor="middle" font-weight="700">16</text><text transform="translate(944.36,558.2) rotate(90)" font-size="4.7" fill="#8c8c8c" text-anchor="middle" font-weight="700">17</text><text transform="translate(944.36,681.8) rotate(90)" font-size="4.7" fill="#8c8c8c" text-anchor="middle" font-weight="700">17</text><text transform="translate(953.97,558.2) rotate(90)" font-size="4.7" fill="#8c8c8c" text-anchor="middle" font-weight="700">18</text><text transform="translate(953.97,681.8) rotate(90)" font-size="4.7" fill="#8c8c8c" text-anchor="middle" font-weight="700">18</text><text transform="translate(963.58,558.2) rotate(90)" font-size="4.7" fill="#8c8c8c" text-anchor="middle" font-weight="700">19</text><text transform="translate(963.58,681.8) rotate(90)" font-size="4.7" fill="#8c8c8c" text-anchor="middle" font-weight="700">19</text><text transform="translate(973.19,558.2) rotate(90)" font-size="4.7" fill="#8c8c8c" text-anchor="middle" font-weight="700">20</text><text transform="translate(973.19,681.8) rotate(90)" font-size="4.7" fill="#8c8c8c" text-anchor="middle" font-weight="700">20</text><text transform="translate(982.8,558.2) rotate(90)" font-size="4.7" fill="#8c8c8c" text-anchor="middle" font-weight="700">21</text><text transform="translate(982.8,681.8) rotate(90)" font-size="4.7" fill="#8c8c8c" text-anchor="middle" font-weight="700">21</text><text transform="translate(992.41,558.2) rotate(90)" font-size="4.7" fill="#8c8c8c" text-anchor="middle" font-weight="700">22</text><text transform="translate(992.41,681.8) rotate(90)" font-size="4.7" fill="#8c8c8c" text-anchor="middle" font-weight="700">22</text><text transform="translate(1002.02,558.2) rotate(90)" font-size="4.7" fill="#8c8c8c" text-anchor="middle" font-weight="700">23</text><text transform="translate(1002.02,681.8) rotate(90)" font-size="4.7" fill="#8c8c8c" text-anchor="middle" font-weight="700">23</text><text transform="translate(1011.63,558.2) rotate(90)" font-size="4.7" fill="#8c8c8c" text-anchor="middle" font-weight="700">24</text><text transform="translate(1011.63,681.8) rotate(90)" font-size="4.7" fill="#8c8c8c" text-anchor="middle" font-weight="700">24</text><text transform="translate(1021.24,558.2) rotate(90)" font-size="4.7" fill="#8c8c8c" text-anchor="middle" font-weight="700">25</text><text transform="translate(1021.24,681.8) rotate(90)" font-size="4.7" fill="#8c8c8c" text-anchor="middle" font-weight="700">25</text><text transform="translate(1030.85,558.2) rotate(90)" font-size="4.7" fill="#8c8c8c" text-anchor="middle" font-weight="700">26</text><text transform="translate(1030.85,681.8) rotate(90)" font-size="4.7" fill="#8c8c8c" text-anchor="middle" font-weight="700">26</text><text transform="translate(1040.46,558.2) rotate(90)" font-size="4.7" fill="#8c8c8c" text-anchor="middle" font-weight="700">27</text><text transform="translate(1040.46,681.8) rotate(90)" font-size="4.7" fill="#8c8c8c" text-anchor="middle" font-weight="700">27</text></g><rect x="281.2" y="547" width="24.8" height="17.3" fill="#333333" rx="8.6"/><rect x="300" y="549" width="34" height="13.2" fill="#333333" /><rect x="303" y="543.9" width="12.2" height="23.1" fill="#333333" rx="2.2"/><ellipse cx="309.7" cy="555.5" rx="2.4" ry="8.6" fill="#262626"/><rect x="320.2" y="543.9" width="11.6" height="23.1" fill="#333333" rx="2.2"/><ellipse cx="326.6" cy="555.5" rx="2.4" ry="8.6" fill="#262626"/><path d="M331.6 538.6L340.4 531.1H418.2V579.5H340.4L331.6 572.4Z" fill="#333333"/><rect x="361" y="530.6" width="3.4" height="2.2" fill="#f4f5f7" /><rect x="361" y="577.8" width="3.4" height="2.2" fill="#f4f5f7" /><rect x="367.1" y="530.6" width="3.4" height="2.2" fill="#f4f5f7" /><rect x="367.1" y="577.8" width="3.4" height="2.2" fill="#f4f5f7" /><rect x="373.2" y="530.6" width="3.4" height="2.2" fill="#f4f5f7" /><rect x="373.2" y="577.8" width="3.4" height="2.2" fill="#f4f5f7" /><rect x="379.3" y="530.6" width="3.4" height="2.2" fill="#f4f5f7" /><rect x="379.3" y="577.8" width="3.4" height="2.2" fill="#f4f5f7" /><rect x="385.4" y="530.6" width="3.4" height="2.2" fill="#f4f5f7" /><rect x="385.4" y="577.8" width="3.4" height="2.2" fill="#f4f5f7" /><rect x="391.5" y="530.6" width="3.4" height="2.2" fill="#f4f5f7" /><rect x="391.5" y="577.8" width="3.4" height="2.2" fill="#f4f5f7" /><rect x="362.8" y="541.2" width="45.8" height="29.2" fill="#2a2a2a" /><g stroke="#1c1c1c" stroke-width="1.1" fill="none"><path d="M369 555.6H399"/><path d="M376 555.6L381 550.2H387"/><path d="M380 555.6L385 561H391"/></g><circle cx="399.4" cy="555.6" r="2.2" fill="#1c1c1c"/><rect x="386" y="548.8" width="3" height="3" fill="#1c1c1c"/><circle cx="392" cy="561" r="1.6" fill="#1c1c1c"/><path d="M366 555.6L370.4 553.4V557.8Z" fill="#1c1c1c"/><rect x="418.2" y="540.1" width="44.6" height="30.9" fill="#c2c2c2" /><rect x="418.2" y="540.1" width="44.6" height="15.1" fill="#c9c9c9" /><path d="M435.4 555.4l1.8 1.8 1.8-1.8" stroke="#b2b2b2" stroke-width="0.8" fill="none"/><path d="M493.2 491.6Q493.2 489.1 495.7 489.1H740.4L743 491.7V537.6L753 547.6V670.4L743 680.4V688.6Q743 691.1 740.5 691.1H495.7Q493.2 691.1 493.2 688.6Z" fill="#2f6f9f"/><path d="M493.2 686.6V688.6Q493.2 691.1 495.7 691.1H740.5Q743 691.1 743 688.6V686.6Z" fill="#245b86"/><rect x="499.6" y="527.4" width="11.4" height="57.2" fill="#eef1f4" rx="5.7"/><rect x="468.7" y="533.2" width="63" height="45.2" fill="#dbdbdb" /><rect x="527.8" y="548.4" width="3.9" height="14.6" fill="#cdcdcd" /><rect x="468.7" y="576.6" width="63" height="1.8" fill="#cfcfcf" /><rect x="505" y="496.6" width="26.7" height="24" fill="#dedede" rx="1.5"/><rect x="503.6" y="500" width="2.6" height="3.4" fill="#c9c9c9" /><rect x="503.6" y="513.6" width="2.6" height="3.4" fill="#c9c9c9" /><rect x="530.4" y="500" width="2.6" height="3.4" fill="#c9c9c9" /><rect x="530.4" y="513.6" width="2.6" height="3.4" fill="#c9c9c9" /><circle cx="517.2" cy="508.6" r="6.9" fill="#a8432b"/><circle cx="550.3" cy="498.8" r="5.4" fill="#fff" stroke="#d9d3b8" stroke-width="1"/><circle cx="744.2" cy="556.4" r="5.4" fill="#fff" stroke="#d9d3b8" stroke-width="1"/><circle cx="744.2" cy="662.6" r="5.4" fill="#fff" stroke="#d9d3b8" stroke-width="1"/><circle cx="546.4" cy="681.6" r="5.4" fill="#fff" stroke="#d9d3b8" stroke-width="1"/><rect x="559" y="494.4" width="97.6" height="9.4" fill="#2b2b2b" /><rect x="561.18" y="496.4" width="5.4" height="5.4" fill="#111" /><rect x="561.18" y="496.4" width="5.4" height="1.6" fill="#4a4a4a" /><rect x="570.94" y="496.4" width="5.4" height="5.4" fill="#111" /><rect x="570.94" y="496.4" width="5.4" height="1.6" fill="#4a4a4a" /><rect x="580.7" y="496.4" width="5.4" height="5.4" fill="#111" /><rect x="580.7" y="496.4" width="5.4" height="1.6" fill="#4a4a4a" /><rect x="590.46" y="496.4" width="5.4" height="5.4" fill="#111" /><rect x="590.46" y="496.4" width="5.4" height="1.6" fill="#4a4a4a" /><rect x="600.22" y="496.4" width="5.4" height="5.4" fill="#111" /><rect x="600.22" y="496.4" width="5.4" height="1.6" fill="#4a4a4a" /><rect x="609.98" y="496.4" width="5.4" height="5.4" fill="#111" /><rect x="609.98" y="496.4" width="5.4" height="1.6" fill="#4a4a4a" /><rect x="619.74" y="496.4" width="5.4" height="5.4" fill="#111" /><rect x="619.74" y="496.4" width="5.4" height="1.6" fill="#4a4a4a" /><rect x="629.5" y="496.4" width="5.4" height="5.4" fill="#111" /><rect x="629.5" y="496.4" width="5.4" height="1.6" fill="#4a4a4a" /><rect x="639.26" y="496.4" width="5.4" height="5.4" fill="#111" /><rect x="639.26" y="496.4" width="5.4" height="1.6" fill="#4a4a4a" /><rect x="649.02" y="496.4" width="5.4" height="5.4" fill="#111" /><rect x="649.02" y="496.4" width="5.4" height="1.6" fill="#4a4a4a" /><rect x="661" y="494.4" width="78.7" height="9.4" fill="#2b2b2b" /><rect x="663.22" y="496.4" width="5.4" height="5.4" fill="#111" /><rect x="663.22" y="496.4" width="5.4" height="1.6" fill="#4a4a4a" /><rect x="673.06" y="496.4" width="5.4" height="5.4" fill="#111" /><rect x="673.06" y="496.4" width="5.4" height="1.6" fill="#4a4a4a" /><rect x="682.89" y="496.4" width="5.4" height="5.4" fill="#111" /><rect x="682.89" y="496.4" width="5.4" height="1.6" fill="#4a4a4a" /><rect x="692.73" y="496.4" width="5.4" height="5.4" fill="#111" /><rect x="692.73" y="496.4" width="5.4" height="1.6" fill="#4a4a4a" /><rect x="702.57" y="496.4" width="5.4" height="5.4" fill="#111" /><rect x="702.57" y="496.4" width="5.4" height="1.6" fill="#4a4a4a" /><rect x="712.41" y="496.4" width="5.4" height="5.4" fill="#111" /><rect x="712.41" y="496.4" width="5.4" height="1.6" fill="#4a4a4a" /><rect x="722.24" y="496.4" width="5.4" height="5.4" fill="#111" /><rect x="722.24" y="496.4" width="5.4" height="1.6" fill="#4a4a4a" /><rect x="732.08" y="496.4" width="5.4" height="5.4" fill="#111" /><rect x="732.08" y="496.4" width="5.4" height="1.6" fill="#4a4a4a" /><rect x="593.6" y="677.6" width="78.1" height="9" fill="#2b2b2b" /><rect x="595.78" y="679.6" width="5.4" height="5" fill="#111" /><rect x="595.78" y="679.6" width="5.4" height="1.6" fill="#4a4a4a" /><rect x="605.54" y="679.6" width="5.4" height="5" fill="#111" /><rect x="605.54" y="679.6" width="5.4" height="1.6" fill="#4a4a4a" /><rect x="615.31" y="679.6" width="5.4" height="5" fill="#111" /><rect x="615.31" y="679.6" width="5.4" height="1.6" fill="#4a4a4a" /><rect x="625.07" y="679.6" width="5.4" height="5" fill="#111" /><rect x="625.07" y="679.6" width="5.4" height="1.6" fill="#4a4a4a" /><rect x="634.83" y="679.6" width="5.4" height="5" fill="#111" /><rect x="634.83" y="679.6" width="5.4" height="1.6" fill="#4a4a4a" /><rect x="644.59" y="679.6" width="5.4" height="5" fill="#111" /><rect x="644.59" y="679.6" width="5.4" height="1.6" fill="#4a4a4a" /><rect x="654.36" y="679.6" width="5.4" height="5" fill="#111" /><rect x="654.36" y="679.6" width="5.4" height="1.6" fill="#4a4a4a" /><rect x="664.12" y="679.6" width="5.4" height="5" fill="#111" /><rect x="664.12" y="679.6" width="5.4" height="1.6" fill="#4a4a4a" /><rect x="680.5" y="677.6" width="59.2" height="9" fill="#2b2b2b" /><rect x="682.73" y="679.6" width="5.4" height="5" fill="#111" /><rect x="682.73" y="679.6" width="5.4" height="1.6" fill="#4a4a4a" /><rect x="692.6" y="679.6" width="5.4" height="5" fill="#111" /><rect x="692.6" y="679.6" width="5.4" height="1.6" fill="#4a4a4a" /><rect x="702.47" y="679.6" width="5.4" height="5" fill="#111" /><rect x="702.47" y="679.6" width="5.4" height="1.6" fill="#4a4a4a" /><rect x="712.33" y="679.6" width="5.4" height="5" fill="#111" /><rect x="712.33" y="679.6" width="5.4" height="1.6" fill="#4a4a4a" /><rect x="722.2" y="679.6" width="5.4" height="5" fill="#111" /><rect x="722.2" y="679.6" width="5.4" height="1.6" fill="#4a4a4a" /><rect x="732.07" y="679.6" width="5.4" height="5" fill="#111" /><rect x="732.07" y="679.6" width="5.4" height="1.6" fill="#4a4a4a" /><rect x="557" y="551" width="20.4" height="21.3" fill="#3a4248" /><rect x="558.3" y="610.3" width="11.9" height="11.7" fill="#3a4248" /><rect x="539.7" y="584.2" width="46.5" height="17.8" fill="#e3e3e3" rx="8.9"/><text x="563" y="595.6" font-size="5.6" fill="#f3f3f3" text-anchor="middle" font-weight="700">16.000</text><rect x="513.6" y="614.8" width="12.8" height="25.2" fill="#3a4248" /><rect x="507" y="621" width="6.6" height="13" fill="#d9d9d9" rx="1"/><rect x="526.4" y="617.4" width="6.6" height="3.6" fill="#d9d9d9" /><rect x="526.4" y="625.4" width="6.6" height="3.6" fill="#d9d9d9" /><rect x="526.4" y="633.4" width="6.6" height="3.6" fill="#d9d9d9" /><rect x="570.6" y="630.7" width="10" height="10.7" fill="#3a4248" /><rect x="568" y="631.6" width="2.6" height="2.4" fill="#d9d9d9" /><rect x="568" y="636" width="2.6" height="2.4" fill="#d9d9d9" /><rect x="580.6" y="631.6" width="2.6" height="2" fill="#d9d9d9" /><rect x="580.6" y="635" width="2.6" height="2" fill="#d9d9d9" /><rect x="580.6" y="638.4" width="2.6" height="2" fill="#d9d9d9" /><rect x="598.6" y="614.8" width="141.1" height="33.2" fill="#373a3c" /><rect x="601.04" y="614.2" width="5.2" height="2.2" fill="#d6d6d6" /><rect x="601.04" y="646.4" width="5.2" height="2.2" fill="#d6d6d6" /><rect x="611.12" y="614.2" width="5.2" height="2.2" fill="#d6d6d6" /><rect x="611.12" y="646.4" width="5.2" height="2.2" fill="#d6d6d6" /><rect x="621.2" y="614.2" width="5.2" height="2.2" fill="#d6d6d6" /><rect x="621.2" y="646.4" width="5.2" height="2.2" fill="#d6d6d6" /><rect x="631.27" y="614.2" width="5.2" height="2.2" fill="#d6d6d6" /><rect x="631.27" y="646.4" width="5.2" height="2.2" fill="#d6d6d6" /><rect x="641.35" y="614.2" width="5.2" height="2.2" fill="#d6d6d6" /><rect x="641.35" y="646.4" width="5.2" height="2.2" fill="#d6d6d6" /><rect x="651.43" y="614.2" width="5.2" height="2.2" fill="#d6d6d6" /><rect x="651.43" y="646.4" width="5.2" height="2.2" fill="#d6d6d6" /><rect x="661.51" y="614.2" width="5.2" height="2.2" fill="#d6d6d6" /><rect x="661.51" y="646.4" width="5.2" height="2.2" fill="#d6d6d6" /><rect x="671.59" y="614.2" width="5.2" height="2.2" fill="#d6d6d6" /><rect x="671.59" y="646.4" width="5.2" height="2.2" fill="#d6d6d6" /><rect x="681.67" y="614.2" width="5.2" height="2.2" fill="#d6d6d6" /><rect x="681.67" y="646.4" width="5.2" height="2.2" fill="#d6d6d6" /><rect x="691.75" y="614.2" width="5.2" height="2.2" fill="#d6d6d6" /><rect x="691.75" y="646.4" width="5.2" height="2.2" fill="#d6d6d6" /><rect x="701.83" y="614.2" width="5.2" height="2.2" fill="#d6d6d6" /><rect x="701.83" y="646.4" width="5.2" height="2.2" fill="#d6d6d6" /><rect x="711.9" y="614.2" width="5.2" height="2.2" fill="#d6d6d6" /><rect x="711.9" y="646.4" width="5.2" height="2.2" fill="#d6d6d6" /><rect x="721.98" y="614.2" width="5.2" height="2.2" fill="#d6d6d6" /><rect x="721.98" y="646.4" width="5.2" height="2.2" fill="#d6d6d6" /><rect x="732.06" y="614.2" width="5.2" height="2.2" fill="#d6d6d6" /><rect x="732.06" y="646.4" width="5.2" height="2.2" fill="#d6d6d6" /><circle cx="618.4" cy="631" r="3.4" fill="#1c1c1c"/><circle cx="719.4" cy="631" r="3.4" fill="#1c1c1c"/><circle cx="557" cy="660" r="11.8" fill="#e6e6e6" stroke="#c6c6c6" stroke-width="1"/><path d="M547.6 662.8A9.8 9.8 0 0 0 566.4 662.8Z" fill="#333"/><circle cx="584.8" cy="660" r="11.8" fill="#e6e6e6" stroke="#c6c6c6" stroke-width="1"/><path d="M575.4 662.8A9.8 9.8 0 0 0 594.2 662.8Z" fill="#333"/><rect x="482.5" y="646.1" width="11.5" height="35.6" fill="#1f1f1f" rx="1.5"/><rect x="488" y="648" width="47.7" height="32" fill="#2d2f31" rx="4"/><rect x="494" y="650" width="40" height="28" fill="#33373a" rx="3"/><g stroke="#fff" stroke-width="3.4" fill="none"><ellipse cx="625.4" cy="544.4" rx="10.3" ry="9.2"/><ellipse cx="646" cy="544.4" rx="10.3" ry="9.2"/></g><path d="M621.6 544.4H628.6M642.6 544.4H649.6M646.1 540.9V547.9" stroke="#fff" stroke-width="1.8"/><text x="615" y="563.4" font-size="6.6" fill="#fff" font-weight="700" textLength="41.4">ARDUINO</text><text x="668.6" y="551" font-size="17.4" fill="#fff" textLength="35.6">UNO</text><rect x="592.8" y="533.6" width="12.5" height="4.2" fill="#d9d9d9" /><text x="590" y="537.5" font-size="5" fill="#fff" text-anchor="end" font-weight="700">L</text><rect x="592.8" y="552.2" width="12.5" height="4.2" fill="#d9d9d9" /><text x="590" y="556.1" font-size="5" fill="#fff" text-anchor="end" font-weight="700">TX</text><rect x="592.8" y="561.5" width="12.5" height="4.2" fill="#d9d9d9" /><text x="590" y="565.4" font-size="5" fill="#fff" text-anchor="end" font-weight="700">RX</text><rect x="714.2" y="552" width="11.4" height="4.2" fill="#d9d9d9" /><text x="727" y="556" font-size="5" fill="#fff" font-weight="700">ON</text><text x="652" y="524.8" font-size="6.2" fill="#fff" font-weight="700" textLength="62">DIGITAL (PWM~)</text><path d="M599.4 527.6H736.3" stroke="#c9dcea" stroke-width="0.8"/><path d="M622 651.5H669M680.5 651.5H739" stroke="#c9dcea" stroke-width="0.8"/><text x="642.5" y="659.2" font-size="6.4" fill="#fff" font-weight="700" textLength="26.4">POWER</text><text x="695" y="659.2" font-size="6.4" fill="#fff" font-weight="700" textLength="40.4">ANALOG IN</text><text transform="translate(585.3,507.4) rotate(-90)" font-size="5" fill="#fff" text-anchor="end" font-weight="700">AREF</text><text transform="translate(595.06,507.4) rotate(-90)" font-size="5" fill="#fff" text-anchor="end" font-weight="700">GND</text><text transform="translate(604.82,507.4) rotate(-90)" font-size="5" fill="#fff" text-anchor="end" font-weight="700">13</text><text transform="translate(614.58,507.4) rotate(-90)" font-size="5" fill="#fff" text-anchor="end" font-weight="700">12</text><text transform="translate(624.34,507.4) rotate(-90)" font-size="5" fill="#fff" text-anchor="end" font-weight="700">~11</text><text transform="translate(634.1,507.4) rotate(-90)" font-size="5" fill="#fff" text-anchor="end" font-weight="700">~10</text><text transform="translate(643.86,507.4) rotate(-90)" font-size="5" fill="#fff" text-anchor="end" font-weight="700">~9</text><text transform="translate(653.62,507.4) rotate(-90)" font-size="5" fill="#fff" text-anchor="end" font-weight="700">8</text><text transform="translate(667.82,507.4) rotate(-90)" font-size="5" fill="#fff" text-anchor="end" font-weight="700">7</text><text transform="translate(677.66,507.4) rotate(-90)" font-size="5" fill="#fff" text-anchor="end" font-weight="700">~6</text><text transform="translate(687.5,507.4) rotate(-90)" font-size="5" fill="#fff" text-anchor="end" font-weight="700">~5</text><text transform="translate(697.34,507.4) rotate(-90)" font-size="5" fill="#fff" text-anchor="end" font-weight="700">4</text><text transform="translate(707.18,507.4) rotate(-90)" font-size="5" fill="#fff" text-anchor="end" font-weight="700">~3</text><text transform="translate(717.02,507.4) rotate(-90)" font-size="5" fill="#fff" text-anchor="end" font-weight="700">2</text><text transform="translate(726.86,507.4) rotate(-90)" font-size="5" fill="#fff" text-anchor="end" font-weight="700">TX→1</text><text transform="translate(736.7,507.4) rotate(-90)" font-size="5" fill="#fff" text-anchor="end" font-weight="700">RX←0</text><text transform="translate(610.14,675.4) rotate(-90)" font-size="4.6" fill="#fff" text-anchor="start" font-weight="700">IOREF</text><text transform="translate(619.9,675.4) rotate(-90)" font-size="4.6" fill="#fff" text-anchor="start" font-weight="700">RESET</text><text transform="translate(629.66,675.4) rotate(-90)" font-size="4.6" fill="#fff" text-anchor="start" font-weight="700">3.3V</text><text transform="translate(639.42,675.4) rotate(-90)" font-size="4.6" fill="#fff" text-anchor="start" font-weight="700">5V</text><text transform="translate(649.18,675.4) rotate(-90)" font-size="4.6" fill="#fff" text-anchor="start" font-weight="700">GND</text><text transform="translate(658.94,675.4) rotate(-90)" font-size="4.6" fill="#fff" text-anchor="start" font-weight="700">GND</text><text transform="translate(668.7,675.4) rotate(-90)" font-size="4.6" fill="#fff" text-anchor="start" font-weight="700">Vin</text><text transform="translate(687.33,675.4) rotate(-90)" font-size="5" fill="#fff" text-anchor="start" font-weight="700">A0</text><text transform="translate(697.2,675.4) rotate(-90)" font-size="5" fill="#fff" text-anchor="start" font-weight="700">A1</text><text transform="translate(707.07,675.4) rotate(-90)" font-size="5" fill="#fff" text-anchor="start" font-weight="700">A2</text><text transform="translate(716.94,675.4) rotate(-90)" font-size="5" fill="#fff" text-anchor="start" font-weight="700">A3</text><text transform="translate(726.81,675.4) rotate(-90)" font-size="5" fill="#fff" text-anchor="start" font-weight="700">A4</text><text transform="translate(736.68,675.4) rotate(-90)" font-size="5" fill="#fff" text-anchor="start" font-weight="700">A5</text><rect x="886.6" y="604.2" width="3.8" height="6.4" fill="#9a9a9a" /><rect x="886.6" y="630.6" width="3.8" height="6.2" fill="#9a9a9a" /><rect x="887.3" y="604.9" width="2.4" height="2.4" fill="#555" /><rect x="887.3" y="633.5" width="2.4" height="2.4" fill="#555" /><rect x="896.21" y="604.2" width="3.8" height="6.4" fill="#9a9a9a" /><rect x="896.21" y="630.6" width="3.8" height="6.2" fill="#9a9a9a" /><rect x="896.91" y="604.9" width="2.4" height="2.4" fill="#555" /><rect x="896.91" y="633.5" width="2.4" height="2.4" fill="#555" /><rect x="905.82" y="604.2" width="3.8" height="6.4" fill="#9a9a9a" /><rect x="905.82" y="630.6" width="3.8" height="6.2" fill="#9a9a9a" /><rect x="906.52" y="604.9" width="2.4" height="2.4" fill="#555" /><rect x="906.52" y="633.5" width="2.4" height="2.4" fill="#555" /><rect x="915.43" y="604.2" width="3.8" height="6.4" fill="#9a9a9a" /><rect x="915.43" y="630.6" width="3.8" height="6.2" fill="#9a9a9a" /><rect x="916.13" y="604.9" width="2.4" height="2.4" fill="#555" /><rect x="916.13" y="633.5" width="2.4" height="2.4" fill="#555" /><rect x="925.04" y="604.2" width="3.8" height="6.4" fill="#9a9a9a" /><rect x="925.04" y="630.6" width="3.8" height="6.2" fill="#9a9a9a" /><rect x="925.74" y="604.9" width="2.4" height="2.4" fill="#555" /><rect x="925.74" y="633.5" width="2.4" height="2.4" fill="#555" /><rect x="934.65" y="604.2" width="3.8" height="6.4" fill="#9a9a9a" /><rect x="934.65" y="630.6" width="3.8" height="6.2" fill="#9a9a9a" /><rect x="935.35" y="604.9" width="2.4" height="2.4" fill="#555" /><rect x="935.35" y="633.5" width="2.4" height="2.4" fill="#555" /><rect x="944.26" y="604.2" width="3.8" height="6.4" fill="#9a9a9a" /><rect x="944.26" y="630.6" width="3.8" height="6.2" fill="#9a9a9a" /><rect x="944.96" y="604.9" width="2.4" height="2.4" fill="#555" /><rect x="944.96" y="633.5" width="2.4" height="2.4" fill="#555" /><rect x="953.87" y="604.2" width="3.8" height="6.4" fill="#9a9a9a" /><rect x="953.87" y="630.6" width="3.8" height="6.2" fill="#9a9a9a" /><rect x="954.57" y="604.9" width="2.4" height="2.4" fill="#555" /><rect x="954.57" y="633.5" width="2.4" height="2.4" fill="#555" /><rect x="882.7" y="610.3" width="78.5" height="20.5" fill="#3a3a3a" rx="1.6"/><path d="M882.7 617.4A3.2 3.2 0 0 1 882.7 623.8Z" fill="#1d1d1d"/><circle cx="888.4" cy="627.6" r="1.3" fill="#fff"/><text x="922" y="623.2" font-size="6.6" fill="#fff" text-anchor="middle" textLength="22">L293D</text><path d="M802.01 538.7V711.7" stroke="#e8262a" stroke-width="2.6" fill="none" stroke-linecap="round" stroke-linejoin="round"/><path d="M811.62 529.2V702.2" stroke="#333" stroke-width="2.6" fill="none" stroke-linecap="round" stroke-linejoin="round"/><path d="M888.5 538.7V596.5M888.5 644.3V711.7" stroke="#e8262a" stroke-width="2.6" fill="none" stroke-linecap="round" stroke-linejoin="round"/><path d="M917.33 529.2V596.5M917.33 644.3V702.2" stroke="#333" stroke-width="2.6" fill="none" stroke-linecap="round" stroke-linejoin="round"/><path d="M926.94 529.2V596.5M926.94 644.3V702.2" stroke="#333" stroke-width="2.6" fill="none" stroke-linecap="round" stroke-linejoin="round"/><path d="M955.77 538.7V596.5M955.77 644.3V702.2" stroke="#e8262a" stroke-width="2.6" fill="none" stroke-linecap="round" stroke-linejoin="round"/><path d="M638.8 683L637.2 756Q637 766.2 647 766.2H782Q792.4 766.2 792.4 756V538.7" stroke="#e8262a" stroke-width="2.3" fill="none" stroke-linecap="round" stroke-linejoin="round"/><path d="M647 683L651 775Q651.6 785.7 662 785.3L760 782.2Q771 781.8 771 771L770.3 493L792.2 529" stroke="#3db43d" stroke-width="2.3" fill="none" stroke-linecap="round" stroke-linejoin="round"/><path d="M632 499L638.5 814Q638.8 826 650.6 826H946Q946.2 826 946.2 820V644.3" stroke="#1a9bd7" stroke-width="2.3" fill="none" stroke-linecap="round" stroke-linejoin="round"/><path d="M612.7 499L606.2 854Q606 866 618 866H887Q899 866 899 854L898.4 644.3" stroke="#3db43d" stroke-width="2.3" fill="none" stroke-linecap="round" stroke-linejoin="round"/><path d="M652 499L655.4 420Q656 410 666 410H879Q889.4 410 890 420.5L898.4 596.5" stroke="#1a9bd7" stroke-width="2.3" fill="none" stroke-linecap="round" stroke-linejoin="round"/><path d="M641.5 499L640.8 471.5Q640.6 461.5 650.6 461.5H934Q944 461.5 944.1 471.5L946.2 596.5" stroke="#1a9bd7" stroke-width="2.3" fill="none" stroke-linecap="round" stroke-linejoin="round"/><path d="M929 418.3H908Q898.4 418.4 898.8 429L907.6 596.5" stroke="#3db43d" stroke-width="2.3" fill="none" stroke-linecap="round" stroke-linejoin="round"/><path d="M928 427.6L926 428.6L936.7 596.5" stroke="#3db43d" stroke-width="2.3" fill="none" stroke-linecap="round" stroke-linejoin="round"/><path d="M907.6 644.3L909.8 722L913.4 856.6H933.4" stroke="#3db43d" stroke-width="2.3" fill="none" stroke-linecap="round" stroke-linejoin="round"/><path d="M936.7 644.3L934 722L931.6 846.8H934" stroke="#3db43d" stroke-width="2.3" fill="none" stroke-linecap="round" stroke-linejoin="round"/><g transform="translate(5.3,429.7)"><rect x="903.1" y="294.6" width="115.6" height="14.3" fill="#f1f2f3" rx="2"/><rect x="903.6" y="295.1" width="114.6" height="6.65" fill="#f7f7f8" rx="1.5"/><rect x="957.5" y="254" width="6.8" height="15" fill="#f6dc45" /><rect x="929.5" y="267.2" width="63.2" height="111.4" fill="#f3dd00" rx="1.6"/><rect x="929.5" y="267.2" width="63.2" height="5.6" fill="#e3c613" rx="1.6"/><rect x="992.7" y="339.8" width="2.9" height="13.2" fill="#f6dc45" /><clipPath id="mc429"><rect x="932.9" y="377.7" width="56.5" height="27.6" rx="2"/></clipPath><g clip-path="url(#mc429)"><rect x="932.9" y="377.7" width="56.5" height="27.6" fill="#c9a90e" /><path d="M932.9 386.4Q961.1 370.6 989.4 386.4V405.3H932.9Z" fill="#f3dd00"/></g><rect x="931.2" y="391.6" width="1.8" height="2.4" fill="#f6dc45" /><rect x="989.3" y="391.6" width="1.7" height="2.4" fill="#f6dc45" /><rect x="933.4" y="405.3" width="55" height="41.1" fill="#f7f7f8" stroke="#ececee" stroke-width="0.6"/><rect x="937.7" y="405.3" width="46.3" height="27" fill="#e7e7e8" /><rect x="937.7" y="405.3" width="1.5" height="27" fill="#b9b9b9" /><rect x="982.5" y="405.3" width="1.5" height="27" fill="#b9b9b9" /><rect x="937.7" y="432.3" width="46.3" height="11.5" fill="#3d3d3f" /><rect x="937" y="430.6" width="1.4" height="13.2" fill="#c83232" /><path d="M927.6 418.3L931 415.3H937.6V421.4H931Z" fill="#222"/><path d="M927.6 427.8L931 424.8H937.6V430.9H931Z" fill="#b51c1c"/><rect x="957.6" y="428.4" width="1" height="17.6" fill="#8a8a8a" /><rect x="963.8" y="428.4" width="1" height="17.6" fill="#8a8a8a" /><rect x="959.8" y="428.4" width="3" height="39.6" fill="#9c9c9c" /><rect x="953.8" y="445.6" width="14.7" height="1.6" fill="#6a6a6a" /></g><path transform="translate(1006,981) scale(1.05)" d="M0.5 0.8V21.6L5.2 17.2L8.8 25L12 23.6L8.4 16H15Z" fill="#fff" stroke="#111" stroke-width="1.2" stroke-linejoin="round"/></g></svg>
<div class="b" style="left:1043.00px;top:252.00px;width:839.00px;height:770.60px;background:#f0f1f3;"></div>
<div class="b" style="left:1043.00px;top:252.00px;width:1.20px;height:770.60px;background:#dfe2e8;"></div>
<div class="b" style="left:1044.00px;top:317.60px;width:838.00px;height:1.60px;background:#e1e4ea;"></div>
<div class="b" style="left:1053.20px;top:261.20px;width:326.20px;height:44.40px;background:#f0f1f3;border:1px solid #e6e8ed;border-radius:4px;box-sizing:border-box;box-shadow:0 1px 6px rgba(40,50,70,.14);"></div>
<span class="t " style="left:1068.20px;top:274.80px;font-size:20.20px;line-height:20.20px;color:#3d4450;letter-spacing:0.251px;">Blocks</span>
<svg class="b" style="left:1346.00px;top:281.60px;" width="11.40" height="6.60" viewBox="0 0 11.4 6.6"><path d="M0.3 0.4H11.1L5.7 6.3Z" fill="#000"/></svg>
<div class="b" style="left:1044.20px;top:319.20px;width:344.80px;height:110.00px;background:#fff;"></div>
<div class="b" style="left:1046.00px;top:320.00px;width:170.00px;height:32.00px;background:#e9eef2;border-radius:16px;"></div>
<div class="b" style="left:1049.80px;top:324.80px;width:22.20px;height:22.20px;background:#4c97ff;border-radius:50%;box-sizing:border-box;border:1px solid #3d86ec;"></div>
<span class="t " style="left:1083.30px;top:326.02px;font-size:18.40px;line-height:18.40px;color:#575e75;letter-spacing:0.061px;">Output</span>
<div class="b" style="left:1221.80px;top:324.80px;width:22.20px;height:22.20px;background:#ffab19;border-radius:50%;box-sizing:border-box;border:1px solid #ec9c13;"></div>
<span class="t " style="left:1255.60px;top:326.02px;font-size:18.40px;line-height:18.40px;color:#575e75;letter-spacing:0.026px;">Control</span>
<div class="b" style="left:1049.80px;top:357.80px;width:22.20px;height:22.20px;background:#9966ff;border-radius:50%;box-sizing:border-box;border:1px solid #855cd6;"></div>
<span class="t " style="left:1083.30px;top:359.02px;font-size:18.40px;line-height:18.40px;color:#575e75;letter-spacing:0.015px;">Input</span>
<div class="b" style="left:1221.80px;top:357.80px;width:22.20px;height:22.20px;background:#40bf4a;border-radius:50%;box-sizing:border-box;border:1px solid #389438;"></div>
<span class="t " style="left:1255.60px;top:359.02px;font-size:18.40px;line-height:18.40px;color:#575e75;letter-spacing:0.148px;">Math</span>
<div class="b" style="left:1049.80px;top:390.80px;width:22.20px;height:22.20px;background:#999999;border-radius:50%;box-sizing:border-box;border:1px solid #8a8a8a;"></div>
<span class="t " style="left:1083.30px;top:392.02px;font-size:18.40px;line-height:18.40px;color:#575e75;letter-spacing:0.096px;">Notation</span>
<div class="b" style="left:1221.80px;top:390.80px;width:22.20px;height:22.20px;background:#d65cd6;border-radius:50%;box-sizing:border-box;border:1px solid #bd42bd;"></div>
<span class="t " style="left:1255.60px;top:392.02px;font-size:18.40px;line-height:18.40px;color:#575e75;letter-spacing:0.039px;">Variables</span>
<div class="b" style="left:1044.20px;top:429.20px;width:344.80px;height:551.00px;background:#f9f9f9;"></div>
<div class="b" style="left:1389.00px;top:252.00px;width:1.20px;height:728.00px;background:#dfe2e8;"></div>
<svg class="b" style="left:1044.20px;top:429.20px;" width="341.60" height="547.20" viewBox="0 0 341.6 547.2"><g font-family="Liberation Sans,Arial,sans-serif"><g transform="translate(12.30,15.80) scale(1.0335)"><path d="M0 4A4 4 0 0 1 4 0H12c2 0 3 1 4 2l4 4c1 1 2 2 4 2h12c2 0 3 -1 4 -2l4 -4c1 -1 2 -2 4 -2H229.07a4 4 0 0 1 4 4v40a4 4 0 0 1 -4 4H48c-2 0 -3 1 -4 2l-4 4c-1 1 -2 2 -4 2h-12c-2 0 -3 -1 -4 -2l-4 -4c-1 -1 -2 -2 -4 -2H4a4 4 0 0 1 -4 -4Z" fill="#4c97ff" stroke="#3d7fe0" stroke-width="1"/></g><text x="20.88" y="47.11" font-size="16.50" fill="#fff" stroke="#fff" stroke-width="0.5" textLength="130.27">set built-in LED to</text><rect x="159.73" y="24.07" width="84.88" height="33.07" rx="4.13" fill="#4c97ff" stroke="#3d7fe0" stroke-width="1.1"/><text x="171.51" y="47.11" font-size="16.50" fill="#fff" stroke="#fff" stroke-width="0.5" textLength="41.26">HIGH</text><path d="M220.80 38.83 h9.15 l-3.87 4.91 q-0.70 0.90 -1.40 0Z" fill="#fff" stroke="#fff" stroke-width="1" stroke-linejoin="round"/><g transform="translate(12.30,86.02) scale(1.0335)"><path d="M0 4A4 4 0 0 1 4 0H12c2 0 3 1 4 2l4 4c1 1 2 2 4 2h12c2 0 3 -1 4 -2l4 -4c1 -1 2 -2 4 -2H231.08a4 4 0 0 1 4 4v40a4 4 0 0 1 -4 4H48c-2 0 -3 1 -4 2l-4 4c-1 1 -2 2 -4 2h-12c-2 0 -3 -1 -4 -2l-4 -4c-1 -1 -2 -2 -4 -2H4a4 4 0 0 1 -4 -4Z" fill="#4c97ff" stroke="#3d7fe0" stroke-width="1"/></g><text x="20.88" y="117.33" font-size="16.50" fill="#fff" stroke="#fff" stroke-width="0.5" textLength="48.63">set pin</text><rect x="78.09" y="94.29" width="52.79" height="33.07" rx="4.13" fill="#4c97ff" stroke="#3d7fe0" stroke-width="1.1"/><text x="89.87" y="117.33" font-size="16.50" fill="#fff" stroke="#fff" stroke-width="0.5" textLength="9.18">0</text><path d="M107.08 109.05 h9.15 l-3.87 4.91 q-0.70 0.90 -1.40 0Z" fill="#fff" stroke="#fff" stroke-width="1" stroke-linejoin="round"/><text x="139.46" y="117.33" font-size="16.50" fill="#fff" stroke="#fff" stroke-width="0.5" textLength="13.76">to</text><rect x="161.80" y="94.29" width="84.88" height="33.07" rx="4.13" fill="#4c97ff" stroke="#3d7fe0" stroke-width="1.1"/><text x="173.58" y="117.33" font-size="16.50" fill="#fff" stroke="#fff" stroke-width="0.5" textLength="41.26">HIGH</text><path d="M222.88 109.05 h9.15 l-3.87 4.91 q-0.70 0.90 -1.40 0Z" fill="#fff" stroke="#fff" stroke-width="1" stroke-linejoin="round"/><g transform="translate(12.30,156.24) scale(1.0335)"><path d="M0 4A4 4 0 0 1 4 0H12c2 0 3 1 4 2l4 4c1 1 2 2 4 2h12c2 0 3 -1 4 -2l4 -4c1 -1 2 -2 4 -2H187.95a4 4 0 0 1 4 4v40a4 4 0 0 1 -4 4H48c-2 0 -3 1 -4 2l-4 4c-1 1 -2 2 -4 2h-12c-2 0 -3 -1 -4 -2l-4 -4c-1 -1 -2 -2 -4 -2H4a4 4 0 0 1 -4 -4Z" fill="#4c97ff" stroke="#3d7fe0" stroke-width="1"/></g><text x="20.88" y="187.55" font-size="16.50" fill="#fff" stroke="#fff" stroke-width="0.5" textLength="48.63">set pin</text><rect x="78.09" y="164.51" width="52.79" height="33.07" rx="4.13" fill="#4c97ff" stroke="#3d7fe0" stroke-width="1.1"/><text x="89.87" y="187.55" font-size="16.50" fill="#fff" stroke="#fff" stroke-width="0.5" textLength="9.18">3</text><path d="M107.08 179.27 h9.15 l-3.87 4.91 q-0.70 0.90 -1.40 0Z" fill="#fff" stroke="#fff" stroke-width="1" stroke-linejoin="round"/><text x="139.46" y="187.55" font-size="16.50" fill="#fff" stroke="#fff" stroke-width="0.5" textLength="13.76">to</text><rect x="161.80" y="164.92" width="40.31" height="32.25" rx="16.12" fill="#fff" stroke="#3d7fe0" stroke-width="1"/><text x="181.95" y="187.55" font-size="16.50" fill="#575e75" text-anchor="middle">0</text><g transform="translate(12.30,226.46) scale(1.0335)"><path d="M0 4A4 4 0 0 1 4 0H12c2 0 3 1 4 2l4 4c1 1 2 2 4 2h12c2 0 3 -1 4 -2l4 -4c1 -1 2 -2 4 -2H339.19a4 4 0 0 1 4 4v40a4 4 0 0 1 -4 4H48c-2 0 -3 1 -4 2l-4 4c-1 1 -2 2 -4 2h-12c-2 0 -3 -1 -4 -2l-4 -4c-1 -1 -2 -2 -4 -2H4a4 4 0 0 1 -4 -4Z" fill="#4c97ff" stroke="#3d7fe0" stroke-width="1"/></g><text x="20.88" y="257.77" font-size="16.50" fill="#fff" stroke="#fff" stroke-width="0.5" textLength="136.71">rotate servo on pin</text><rect x="166.17" y="234.73" width="52.79" height="33.07" rx="4.13" fill="#4c97ff" stroke="#3d7fe0" stroke-width="1.1"/><text x="177.95" y="257.77" font-size="16.50" fill="#fff" stroke="#fff" stroke-width="0.5" textLength="9.18">0</text><path d="M195.16 249.49 h9.15 l-3.87 4.91 q-0.70 0.90 -1.40 0Z" fill="#fff" stroke="#fff" stroke-width="1" stroke-linejoin="round"/><text x="227.54" y="257.77" font-size="16.50" fill="#fff" stroke="#fff" stroke-width="0.5" textLength="13.76">to</text><rect x="249.88" y="235.14" width="40.31" height="32.25" rx="16.12" fill="#fff" stroke="#3d7fe0" stroke-width="1"/><text x="270.03" y="257.77" font-size="16.50" fill="#575e75" text-anchor="middle">0</text><text x="298.76" y="257.77" font-size="16.50" fill="#fff" stroke="#fff" stroke-width="0.5" textLength="59.65">degrees</text><g transform="translate(12.30,296.68) scale(1.0335)"><path d="M0 4A4 4 0 0 1 4 0H12c2 0 3 1 4 2l4 4c1 1 2 2 4 2h12c2 0 3 -1 4 -2l4 -4c1 -1 2 -2 4 -2H437.56a4 4 0 0 1 4 4v40a4 4 0 0 1 -4 4H48c-2 0 -3 1 -4 2l-4 4c-1 1 -2 2 -4 2h-12c-2 0 -3 -1 -4 -2l-4 -4c-1 -1 -2 -2 -4 -2H4a4 4 0 0 1 -4 -4Z" fill="#4c97ff" stroke="#3d7fe0" stroke-width="1"/></g><text x="20.88" y="327.99" font-size="16.50" fill="#fff" stroke="#fff" stroke-width="0.5" textLength="143.14">play speaker on pin</text><rect x="172.60" y="304.95" width="52.79" height="33.07" rx="4.13" fill="#4c97ff" stroke="#3d7fe0" stroke-width="1.1"/><text x="184.38" y="327.99" font-size="16.50" fill="#fff" stroke="#fff" stroke-width="0.5" textLength="9.18">0</text><path d="M201.59 319.71 h9.15 l-3.87 4.91 q-0.70 0.90 -1.40 0Z" fill="#fff" stroke="#fff" stroke-width="1" stroke-linejoin="round"/><text x="233.97" y="327.99" font-size="16.50" fill="#fff" stroke="#fff" stroke-width="0.5" textLength="66.06">with tone</text><rect x="308.61" y="305.36" width="40.48" height="32.25" rx="16.12" fill="#fff" stroke="#3d7fe0" stroke-width="1"/><text x="328.85" y="327.99" font-size="16.50" fill="#575e75" text-anchor="middle">60</text><text x="357.66" y="327.99" font-size="16.50" fill="#fff" stroke="#fff" stroke-width="0.5" textLength="19.26">for</text><rect x="385.50" y="305.36" width="40.31" height="32.25" rx="16.12" fill="#fff" stroke="#3d7fe0" stroke-width="1"/><text x="405.65" y="327.99" font-size="16.50" fill="#575e75" text-anchor="middle">1</text><text x="434.39" y="327.99" font-size="16.50" fill="#fff" stroke="#fff" stroke-width="0.5" textLength="25.68">sec</text><g transform="translate(12.30,366.90) scale(1.0335)"><path d="M0 4A4 4 0 0 1 4 0H12c2 0 3 1 4 2l4 4c1 1 2 2 4 2h12c2 0 3 -1 4 -2l4 -4c1 -1 2 -2 4 -2H230.61a4 4 0 0 1 4 4v40a4 4 0 0 1 -4 4H48c-2 0 -3 1 -4 2l-4 4c-1 1 -2 2 -4 2h-12c-2 0 -3 -1 -4 -2l-4 -4c-1 -1 -2 -2 -4 -2H4a4 4 0 0 1 -4 -4Z" fill="#4c97ff" stroke="#3d7fe0" stroke-width="1"/></g><text x="20.88" y="398.21" font-size="16.50" fill="#fff" stroke="#fff" stroke-width="0.5" textLength="163.94">turn off speaker on pin</text><rect x="193.40" y="375.17" width="52.79" height="33.07" rx="4.13" fill="#4c97ff" stroke="#3d7fe0" stroke-width="1.1"/><text x="205.18" y="398.21" font-size="16.50" fill="#fff" stroke="#fff" stroke-width="0.5" textLength="9.18">0</text><path d="M222.39 389.93 h9.15 l-3.87 4.91 q-0.70 0.90 -1.40 0Z" fill="#fff" stroke="#fff" stroke-width="1" stroke-linejoin="round"/><g transform="translate(12.30,437.12) scale(1.0335)"><path d="M0 4A4 4 0 0 1 4 0H12c2 0 3 1 4 2l4 4c1 1 2 2 4 2h12c2 0 3 -1 4 -2l4 -4c1 -1 2 -2 4 -2H409.12a4 4 0 0 1 4 4v40a4 4 0 0 1 -4 4H48c-2 0 -3 1 -4 2l-4 4c-1 1 -2 2 -4 2h-12c-2 0 -3 -1 -4 -2l-4 -4c-1 -1 -2 -2 -4 -2H4a4 4 0 0 1 -4 -4Z" fill="#4c97ff" stroke="#3d7fe0" stroke-width="1"/></g><text x="20.88" y="468.43" font-size="16.50" fill="#fff" stroke="#fff" stroke-width="0.5" textLength="154.11">print to serial monitor</text><rect x="183.57" y="445.80" width="101.02" height="32.25" rx="16.12" fill="#fff" stroke="#3d7fe0" stroke-width="1"/><text x="234.08" y="468.43" font-size="16.50" fill="#575e75" text-anchor="middle">hello world</text><rect x="293.16" y="445.39" width="72.97" height="33.07" rx="4.13" fill="#4c97ff" stroke="#3d7fe0" stroke-width="1.1"/><text x="304.94" y="468.43" font-size="16.50" fill="#fff" stroke="#fff" stroke-width="0.5" textLength="29.35">with</text><path d="M342.33 460.15 h9.15 l-3.87 4.91 q-0.70 0.90 -1.40 0Z" fill="#fff" stroke="#fff" stroke-width="1" stroke-linejoin="round"/><text x="374.71" y="468.43" font-size="16.50" fill="#fff" stroke="#fff" stroke-width="0.5" textLength="55.97">newline</text><g transform="translate(12.30,507.34) scale(1.0335)"><path d="M0 4A4 4 0 0 1 4 0H12c2 0 3 1 4 2l4 4c1 1 2 2 4 2h12c2 0 3 -1 4 -2l4 -4c1 -1 2 -2 4 -2H414.47a4 4 0 0 1 4 4v40a4 4 0 0 1 -4 4H48c-2 0 -3 1 -4 2l-4 4c-1 1 -2 2 -4 2h-12c-2 0 -3 -1 -4 -2l-4 -4c-1 -1 -2 -2 -4 -2H4a4 4 0 0 1 -4 -4Z" fill="#4c97ff" stroke="#3d7fe0" stroke-width="1"/></g><text x="20.88" y="538.65" font-size="16.50" fill="#fff" stroke="#fff" stroke-width="0.5" textLength="151.36">set RGB LED in pins</text><rect x="180.82" y="515.61" width="52.79" height="33.07" rx="4.13" fill="#4c97ff" stroke="#3d7fe0" stroke-width="1.1"/><text x="192.60" y="538.65" font-size="16.50" fill="#fff" stroke="#fff" stroke-width="0.5" textLength="9.18">3</text><path d="M209.81 530.37 h9.15 l-3.87 4.91 q-0.70 0.90 -1.40 0Z" fill="#fff" stroke="#fff" stroke-width="1" stroke-linejoin="round"/><rect x="250.77" y="515.61" width="52.79" height="33.07" rx="4.13" fill="#4c97ff" stroke="#3d7fe0" stroke-width="1.1"/><text x="262.55" y="538.65" font-size="16.50" fill="#fff" stroke="#fff" stroke-width="0.5" textLength="9.18">3</text><path d="M279.76 530.37 h9.15 l-3.87 4.91 q-0.70 0.90 -1.40 0Z" fill="#fff" stroke="#fff" stroke-width="1" stroke-linejoin="round"/><rect x="320.71" y="515.61" width="52.79" height="33.07" rx="4.13" fill="#4c97ff" stroke="#3d7fe0" stroke-width="1.1"/><text x="332.50" y="538.65" font-size="16.50" fill="#fff" stroke="#fff" stroke-width="0.5" textLength="9.18">3</text><path d="M349.71 530.37 h9.15 l-3.87 4.91 q-0.70 0.90 -1.40 0Z" fill="#fff" stroke="#fff" stroke-width="1" stroke-linejoin="round"/><text x="382.09" y="538.65" font-size="16.50" fill="#fff" stroke="#fff" stroke-width="0.5" textLength="54.13">to color</text></g></svg>
<div class="b" style="left:1373.80px;top:433.60px;width:8.20px;height:511.00px;background:#c8c8c8;border-radius:4px;"></div>
<div class="b" style="left:1390.20px;top:319.20px;width:490.00px;height:661.00px;background:#f9f9f9;"></div>
<div class="b" style="left:1880.00px;top:319.20px;width:2.00px;height:661.00px;background:#e6e8ec;"></div>
<svg class="b" style="left:1390.20px;top:319.20px;" width="490.00" height="661.00" viewBox="0 0 490 661"><g font-family="Liberation Sans,Arial,sans-serif"><g transform="translate(143.20,86.30) scale(1.0335)"><path d="M0 4A4 4 0 0 1 4 0H12c2 0 3 1 4 2l4 4c1 1 2 2 4 2h12c2 0 3 -1 4 -2l4 -4c1 -1 2 -2 4 -2H230.19a4 4 0 0 1 4 4v40a4 4 0 0 1 -4 4H48c-2 0 -3 1 -4 2l-4 4c-1 1 -2 2 -4 2h-12c-2 0 -3 -1 -4 -2l-4 -4c-1 -1 -2 -2 -4 -2H4a4 4 0 0 1 -4 -4Z" fill="#4c97ff" stroke="#3d7fe0" stroke-width="1"/></g><text x="151.78" y="117.56" font-size="16.37" fill="#fff" stroke="#fff" stroke-width="0.5" textLength="48.23">set pin</text><rect x="208.59" y="94.57" width="52.72" height="33.07" rx="4.13" fill="#4c97ff" stroke="#3d7fe0" stroke-width="1.1"/><text x="220.37" y="117.56" font-size="16.37" fill="#fff" stroke="#fff" stroke-width="0.5" textLength="9.10">8</text><path d="M237.51 109.33 h9.15 l-3.87 4.91 q-0.70 0.90 -1.40 0Z" fill="#fff" stroke="#fff" stroke-width="1" stroke-linejoin="round"/><text x="269.89" y="117.56" font-size="16.37" fill="#fff" stroke="#fff" stroke-width="0.5" textLength="13.65">to</text><rect x="292.12" y="94.57" width="84.54" height="33.07" rx="4.13" fill="#4c97ff" stroke="#3d7fe0" stroke-width="1.1"/><text x="303.90" y="117.56" font-size="16.37" fill="#fff" stroke="#fff" stroke-width="0.5" textLength="40.93">HIGH</text><path d="M352.86 109.33 h9.15 l-3.87 4.91 q-0.70 0.90 -1.40 0Z" fill="#fff" stroke="#fff" stroke-width="1" stroke-linejoin="round"/><g transform="translate(143.20,135.90) scale(1.0335)"><path d="M0 4A4 4 0 0 1 4 0H12c2 0 3 1 4 2l4 4c1 1 2 2 4 2h12c2 0 3 -1 4 -2l4 -4c1 -1 2 -2 4 -2H226.67a4 4 0 0 1 4 4v40a4 4 0 0 1 -4 4H48c-2 0 -3 1 -4 2l-4 4c-1 1 -2 2 -4 2h-12c-2 0 -3 -1 -4 -2l-4 -4c-1 -1 -2 -2 -4 -2H4a4 4 0 0 1 -4 -4Z" fill="#4c97ff" stroke="#3d7fe0" stroke-width="1"/></g><text x="151.78" y="167.16" font-size="16.37" fill="#fff" stroke="#fff" stroke-width="0.5" textLength="48.23">set pin</text><rect x="208.59" y="144.17" width="52.72" height="33.07" rx="4.13" fill="#4c97ff" stroke="#3d7fe0" stroke-width="1.1"/><text x="220.37" y="167.16" font-size="16.37" fill="#fff" stroke="#fff" stroke-width="0.5" textLength="9.10">9</text><path d="M237.51 158.93 h9.15 l-3.87 4.91 q-0.70 0.90 -1.40 0Z" fill="#fff" stroke="#fff" stroke-width="1" stroke-linejoin="round"/><text x="269.89" y="167.16" font-size="16.37" fill="#fff" stroke="#fff" stroke-width="0.5" textLength="13.65">to</text><rect x="292.12" y="144.17" width="80.90" height="33.07" rx="4.13" fill="#4c97ff" stroke="#3d7fe0" stroke-width="1.1"/><text x="303.90" y="167.16" font-size="16.37" fill="#fff" stroke="#fff" stroke-width="0.5" textLength="37.29">LOW</text><path d="M349.22 158.93 h9.15 l-3.87 4.91 q-0.70 0.90 -1.40 0Z" fill="#fff" stroke="#fff" stroke-width="1" stroke-linejoin="round"/><g transform="translate(143.20,185.50) scale(1.0335)"><path d="M0 4A4 4 0 0 1 4 0H12c2 0 3 1 4 2l4 4c1 1 2 2 4 2h12c2 0 3 -1 4 -2l4 -4c1 -1 2 -2 4 -2H239.00a4 4 0 0 1 4 4v40a4 4 0 0 1 -4 4H48c-2 0 -3 1 -4 2l-4 4c-1 1 -2 2 -4 2h-12c-2 0 -3 -1 -4 -2l-4 -4c-1 -1 -2 -2 -4 -2H4a4 4 0 0 1 -4 -4Z" fill="#4c97ff" stroke="#3d7fe0" stroke-width="1"/></g><text x="151.78" y="216.76" font-size="16.37" fill="#fff" stroke="#fff" stroke-width="0.5" textLength="48.23">set pin</text><rect x="208.59" y="193.77" width="61.82" height="33.07" rx="4.13" fill="#4c97ff" stroke="#3d7fe0" stroke-width="1.1"/><text x="220.37" y="216.76" font-size="16.37" fill="#fff" stroke="#fff" stroke-width="0.5" textLength="18.21">10</text><path d="M246.62 208.53 h9.15 l-3.87 4.91 q-0.70 0.90 -1.40 0Z" fill="#fff" stroke="#fff" stroke-width="1" stroke-linejoin="round"/><text x="278.99" y="216.76" font-size="16.37" fill="#fff" stroke="#fff" stroke-width="0.5" textLength="13.65">to</text><rect x="301.22" y="193.77" width="84.54" height="33.07" rx="4.13" fill="#4c97ff" stroke="#3d7fe0" stroke-width="1.1"/><text x="313.00" y="216.76" font-size="16.37" fill="#fff" stroke="#fff" stroke-width="0.5" textLength="40.93">HIGH</text><path d="M361.96 208.53 h9.15 l-3.87 4.91 q-0.70 0.90 -1.40 0Z" fill="#fff" stroke="#fff" stroke-width="1" stroke-linejoin="round"/><g transform="translate(143.20,235.10) scale(1.0335)"><path d="M0 4A4 4 0 0 1 4 0H12c2 0 3 1 4 2l4 4c1 1 2 2 4 2h12c2 0 3 -1 4 -2l4 -4c1 -1 2 -2 4 -2H234.30a4 4 0 0 1 4 4v40a4 4 0 0 1 -4 4H48c-2 0 -3 1 -4 2l-4 4c-1 1 -2 2 -4 2h-12c-2 0 -3 -1 -4 -2l-4 -4c-1 -1 -2 -2 -4 -2H4a4 4 0 0 1 -4 -4Z" fill="#4c97ff" stroke="#3d7fe0" stroke-width="1"/></g><text x="151.78" y="266.36" font-size="16.37" fill="#fff" stroke="#fff" stroke-width="0.5" textLength="48.23">set pin</text><rect x="208.59" y="243.37" width="60.61" height="33.07" rx="4.13" fill="#4c97ff" stroke="#3d7fe0" stroke-width="1.1"/><text x="220.37" y="266.36" font-size="16.37" fill="#fff" stroke="#fff" stroke-width="0.5" textLength="16.99">11</text><path d="M245.40 258.13 h9.15 l-3.87 4.91 q-0.70 0.90 -1.40 0Z" fill="#fff" stroke="#fff" stroke-width="1" stroke-linejoin="round"/><text x="277.78" y="266.36" font-size="16.37" fill="#fff" stroke="#fff" stroke-width="0.5" textLength="13.65">to</text><rect x="300.01" y="243.37" width="80.90" height="33.07" rx="4.13" fill="#4c97ff" stroke="#3d7fe0" stroke-width="1.1"/><text x="311.79" y="266.36" font-size="16.37" fill="#fff" stroke="#fff" stroke-width="0.5" textLength="37.29">LOW</text><path d="M357.11 258.13 h9.15 l-3.87 4.91 q-0.70 0.90 -1.40 0Z" fill="#fff" stroke="#fff" stroke-width="1" stroke-linejoin="round"/></g></svg>
<div class="b" style="left:1414.00px;top:263.30px;width:51.20px;height:43.50px;background:#f0f1f3;border:1px solid #e9ebef;border-radius:4px;box-sizing:border-box;"></div>
<div class="b" style="left:1477.40px;top:263.30px;width:51.20px;height:43.50px;background:#f0f1f3;border:1px solid #e9ebef;border-radius:4px;box-sizing:border-box;"></div>
<div class="b" style="left:1540.80px;top:263.30px;width:51.20px;height:43.50px;background:#f0f1f3;border:1px solid #e9ebef;border-radius:4px;box-sizing:border-box;"></div>
<svg class="b" style="left:1427.00px;top:276.60px;" width="25.40" height="21.00" viewBox="0 0 25.4 21"><path d="M9.9 0.2H15.4V7.2H19.6L12.65 17.3L5.7 7.2H9.9Z" fill="#3a3a3a"/><rect x="0.3" y="17.9" width="24.8" height="2.8" fill="#3a3a3a"/></svg>
<svg class="b" style="left:1490.80px;top:273.80px;" width="24.80" height="22.00" viewBox="0 0 24.8 22"><path d="M5 0.2H19.6L24.5 8.4H0.2Z" fill="#8f9aa8"/><path d="M4.4 2.8H20.4M3 5.6H21.8" stroke="#f0f1f3" stroke-width="0.9"/><rect x="0.2" y="8.8" width="24.3" height="13" rx="1" fill="#8f9aa8"/><rect x="6.8" y="12.2" width="11" height="1.8" fill="#f0f1f3"/></svg>
<svg class="b" style="left:1554.00px;top:272.40px;" width="24.40" height="24.40" viewBox="0 0 24.4 24.4"><ellipse cx="12.2" cy="14" rx="6.3" ry="9.4" fill="#8f9aa8"/><circle cx="12.2" cy="6" r="3.6" fill="#8f9aa8"/><path d="M10 4.4L7 0.8M14.4 4.4L17.4 0.8M6.6 10L2.8 7.2M17.8 10L21.6 7.2M6 14.4L0.8 13.2M18.4 14.4L23.6 13.2M6.8 18.6L2.6 21.8M17.6 18.6L21.8 21.8" stroke="#8f9aa8" stroke-width="1.7" fill="none" stroke-linecap="round"/><path d="M12.2 17V23.4" stroke="#f0f1f3" stroke-width="0.8"/></svg>
<div class="b" style="left:1605.20px;top:252.00px;width:1.20px;height:66.00px;background:#dfe2e8;"></div>
<div class="b" style="left:1615.50px;top:261.40px;width:256.80px;height:44.40px;background:#f0f1f3;border:1px solid #e6e8ed;border-radius:4px;box-sizing:border-box;box-shadow:0 1px 6px rgba(40,50,70,.14);"></div>
<span class="t " style="left:1630.20px;top:274.80px;font-size:20.20px;line-height:20.20px;color:#3d4450;letter-spacing:-0.069px;">1 (Arduino Uno R3)</span>
<svg class="b" style="left:1838.40px;top:281.80px;" width="12.00" height="6.60" viewBox="0 0 12 6.6"><path d="M0.3 0.4H11.7L6 6.3Z" fill="#000"/></svg>
<div class="b" style="left:1869.60px;top:543.00px;width:8.20px;height:401.00px;background:#c9c9c9;border-radius:4px;"></div>
<div class="b" style="left:1432.00px;top:969.60px;width:206.40px;height:8.20px;background:#c9c9c9;border-radius:4px;"></div>
<div class="b" style="left:1801.60px;top:670.20px;width:48.00px;height:48.00px;background:#fff;border-radius:50%;border:2.2px solid #dcdcdf;box-sizing:border-box;"></div>
<svg class="b" style="left:1814.60px;top:683.80px;" width="23.00" height="23.00" viewBox="0 0 23 23"><circle cx="10" cy="10" r="8.8" stroke="#636a84" stroke-width="1.9" fill="none"/><path d="M16.4 16.6L21.6 21.6" stroke="#636a84" stroke-width="2.1"/><path d="M7 10H13" stroke="#636a84" stroke-width="1.9"/><path d="M10 7V13" stroke="#636a84" stroke-width="1.9"/></svg>
<div class="b" style="left:1801.60px;top:730.80px;width:48.00px;height:48.00px;background:#fff;border-radius:50%;border:2.2px solid #dcdcdf;box-sizing:border-box;"></div>
<svg class="b" style="left:1814.60px;top:744.40px;" width="23.00" height="23.00" viewBox="0 0 23 23"><circle cx="10" cy="10" r="8.8" stroke="#636a84" stroke-width="1.9" fill="none"/><path d="M16.4 16.6L21.6 21.6" stroke="#636a84" stroke-width="2.1"/><path d="M7 10H13" stroke="#636a84" stroke-width="1.9"/></svg>
<div class="b" style="left:1801.60px;top:791.40px;width:48.00px;height:48.00px;background:#fff;border-radius:50%;border:2.2px solid #dcdcdf;box-sizing:border-box;"></div>
<svg class="b" style="left:1818.40px;top:808.80px;" width="15.00" height="13.00" viewBox="0 0 15 13"><path d="M0 2.2H14.4M0 10.6H14.4" stroke="#636a84" stroke-width="2.3"/></svg>
<svg class="b" style="left:1777.00px;top:864.80px;" width="58.00" height="74.40" viewBox="0 0 58 74.4"><path d="M16.6 5.2L20.6 0H39L43 5.2Z" fill="#ccc"/><rect x="0" y="5.2" width="58" height="7.6" fill="#ccc"/><path d="M4.4 17.2H53.6V69a5 5 0 0 1 -5 5H9.4a5 5 0 0 1 -5 -5Z" fill="#ccc"/></svg>
<div class="b" style="left:1044.20px;top:980.00px;width:837.80px;height:42.60px;background:#f0f1f3;"></div>
<div class="b" style="left:1044.20px;top:979.60px;width:837.80px;height:1.30px;background:#e1e4ea;"></div>
<div class="b" style="left:1043.00px;top:1021.80px;width:839.00px;height:1.30px;background:#dcdfe6;"></div>
<svg class="b" style="left:1056.40px;top:990.60px;" width="31.00" height="22.00" viewBox="0 0 31 22"><rect x="1" y="1" width="29" height="20" rx="1" stroke="#111" stroke-width="2" fill="none"/><rect x="1" y="1" width="29" height="5.2" fill="#111"/><rect x="3.6" y="2.6" width="2" height="1.8" fill="#fff"/><rect x="6.8" y="2.6" width="2" height="1.8" fill="#fff"/><rect x="10" y="2.6" width="2" height="1.8" fill="#fff"/><path d="M20.4 6V21M20.4 15.6H30" stroke="#111" stroke-width="1.8" fill="none"/><rect x="22.8" y="17.4" width="5.2" height="1.8" fill="#111"/></svg>
<span class="t " style="left:1099.60px;top:990.80px;font-size:18.90px;line-height:18.90px;color:#4a5363;letter-spacing:0.172px;">Serial Monitor</span>
<svg class="b" style="left:1855.00px;top:995.60px;" width="11.60" height="6.60" viewBox="0 0 11.6 6.6"><path d="M0.3 6.3H11.3L5.8 0.4Z" fill="#000"/></svg>
</body></html>
